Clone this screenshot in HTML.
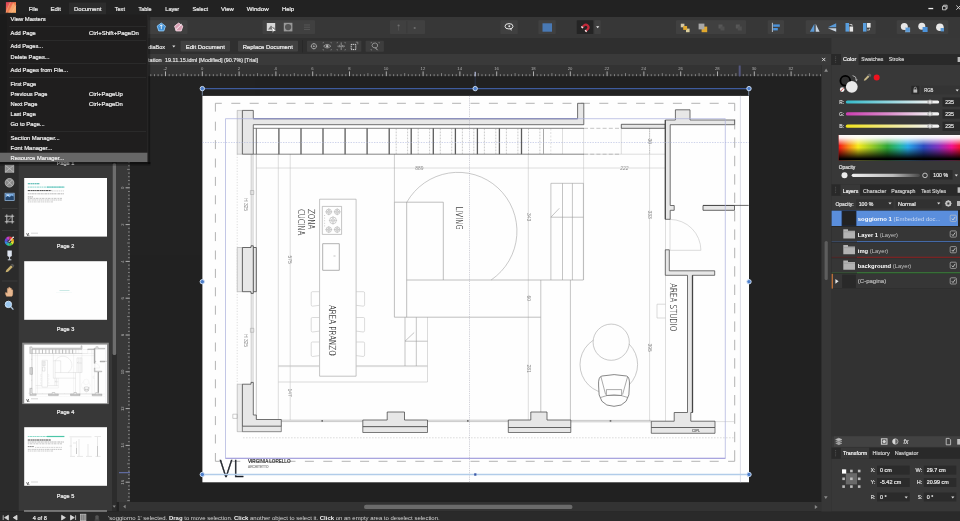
<!DOCTYPE html>
<html><head><meta charset="utf-8"><title>Affinity Publisher</title>
<style>
html,body{margin:0;padding:0;background:#222;overflow:hidden}
svg{display:block;position:absolute;left:0;top:0;opacity:.999;will-change:transform}
text{font-family:"Liberation Sans",sans-serif;white-space:pre}
</style></head><body>
<svg width="960" height="521" viewBox="0 0 960 521">

<rect x="0" y="0" width="960" height="521" fill="#222222" />
<rect x="0" y="0" width="960" height="17" fill="#232323" />
<rect x="0" y="17" width="960" height="21" fill="#383838" />
<rect x="0" y="38" width="960" height="16" fill="#303030" />
<rect x="0" y="54" width="831" height="11" fill="#3b3b3b" />
<rect x="119" y="65" width="702.4" height="11.4" fill="#343434" />
<rect x="116.5" y="77" width="13.5" height="425" fill="#3a3a3a" />
<rect x="130" y="76.4" width="693" height="425.6" fill="#222222" />
<g id="page">
<rect x="202.4" y="95.9" width="546.6" height="386.4" fill="#ffffff" />
<g fill="none" stroke-linecap="butt">
<path d="M215.4 111.6V103.3H221.8 M728.1 103.3H734.7V111.1 M215.4 453V461.3H221.8 M728.1 461.3H734.7V450.2" stroke="#a6a6a6" stroke-width="0.85" fill="none" />
<path d="M231.3 103.3H727 M231.3 461.3H727" stroke="#a6a6a6" stroke-width="0.85" fill="none" stroke-dasharray="9 9.4"/>
<path d="M215.4 121.7V452" stroke="#a6a6a6" stroke-width="0.85" fill="none" stroke-dasharray="9 9.4"/>
<path d="M734.7 119V449" stroke="#a6a6a6" stroke-width="0.85" fill="none" stroke-dasharray="10.4 8"/>
<path d="M740.4 95.9V482.3" stroke="#cfd0de" stroke-width="0.7" fill="none" />
<path d="M278.3 154V420 M290.2 154V420 M528.3 154V420 M583.6 128V280 M649.6 128V421 M621.3 128V154 M562.5 128V154 M665.5 219V421 M670 219V250" stroke="#c4c4c4" stroke-width="0.55" fill="none" />
<path d="M256.3 168H665 M584 154.2H665" stroke="#c4c4c4" stroke-width="0.55" fill="none" />
<path d="M243 437.8H734" stroke="#c4c4c4" stroke-width="0.6" fill="none" stroke-dasharray="1.6 1.4"/>
<path d="M237.2 154V384" stroke="#c8c8c8" stroke-width="0.6" fill="none" stroke-dasharray="1.2 1.6"/>
<path d="M584 128.3H621 M584 154.2H621" stroke="#9e9e9e" stroke-width="0.6" fill="none" stroke-dasharray="4 2.2"/>
<path d="M649.6 128.3V154" stroke="#9e9e9e" stroke-width="0.5" fill="none" stroke-dasharray="1.2 1.2"/>
<path d="M550.8 128.5V154" stroke="#c4c4c4" stroke-width="0.5" fill="none" stroke-dasharray="2 1.5"/>
<path d="M251.2 154V247.5 M253 154V247.5 M251.2 291.7V384 M253 291.7V384 M256.3 154V420" stroke="#9e9e9e" stroke-width="0.55" fill="none" />
<path d="M250.4 190.5h3.4v4h-3.4z M250.4 328.3h3.4v4h-3.4z" stroke="#9e9e9e" stroke-width="0.5" fill="none" />
<path d="M281.3 420.2H362.8 M281.3 421.6H362.8 M427.5 420.2H508.3 M427.5 421.6H508.3 M570.8 420.4H651.3 M570.8 421.8H651.3" stroke="#9e9e9e" stroke-width="0.55" fill="none" />
<path d="M715 421.6H735" stroke="#c4c4c4" stroke-width="0.5" fill="none" />
<rect x="321.4" y="420.1" width="1.6" height="1.6" fill="#666" stroke="none"/>
<rect x="467.0" y="420.1" width="1.6" height="1.6" fill="#666" stroke="none"/>
<rect x="609.7" y="420.1" width="1.6" height="1.6" fill="#666" stroke="none"/>
<path d="M319.6 199.2H356.1V376.2H319.6Z" stroke="#9e9e9e" stroke-width="0.6" fill="none" />
<path d="M322.3 206.4H341.6V234.4H322.3Z" stroke="#9e9e9e" stroke-width="0.6" fill="none" />
<path d="M324.6 215v1M324.6 217.6v1M324.6 220.2v1M324.6 222.8v1M324.6 225.4v1" stroke="#9e9e9e" stroke-width="0.5" fill="none" />
<circle cx="328.8" cy="211.8" r="2.7" stroke="#9e9e9e" stroke-width="0.5"/>
<circle cx="328.8" cy="211.8" r="1.4" stroke="#9e9e9e" stroke-width="0.4"/>
<path d="M325.3 211.8H332.3 M328.8 208.3V215.3" stroke="#9e9e9e" stroke-width="0.35" fill="none" />
<circle cx="337.2" cy="211.8" r="2.7" stroke="#9e9e9e" stroke-width="0.5"/>
<circle cx="337.2" cy="211.8" r="1.4" stroke="#9e9e9e" stroke-width="0.4"/>
<path d="M333.7 211.8H340.7 M337.2 208.3V215.3" stroke="#9e9e9e" stroke-width="0.35" fill="none" />
<circle cx="333" cy="220.4" r="3.4" stroke="#9e9e9e" stroke-width="0.5"/>
<circle cx="333" cy="220.4" r="1.7" stroke="#9e9e9e" stroke-width="0.4"/>
<path d="M328.8 220.4H337.2 M333 216.2V224.60000000000002" stroke="#9e9e9e" stroke-width="0.35" fill="none" />
<circle cx="328.8" cy="229.6" r="2.7" stroke="#9e9e9e" stroke-width="0.5"/>
<circle cx="328.8" cy="229.6" r="1.4" stroke="#9e9e9e" stroke-width="0.4"/>
<path d="M325.3 229.6H332.3 M328.8 226.1V233.1" stroke="#9e9e9e" stroke-width="0.35" fill="none" />
<circle cx="337.2" cy="229.6" r="2.7" stroke="#9e9e9e" stroke-width="0.5"/>
<circle cx="337.2" cy="229.6" r="1.4" stroke="#9e9e9e" stroke-width="0.4"/>
<path d="M333.7 229.6H340.7 M337.2 226.1V233.1" stroke="#9e9e9e" stroke-width="0.35" fill="none" />
<path d="M322.7 243.7H339.3V270.3H322.7Z" stroke="#9e9e9e" stroke-width="0.8" fill="none" />
<path d="M333.5 256h2" stroke="#9e9e9e" stroke-width="0.6" fill="none" />
<path d="M319.6 291.7H312.3Q311.2 291.7 311.2 292.9V304.7Q311.2 306.09999999999997 312.5 306.2L319.6 305.3" stroke="#c4c4c4" stroke-width="0.6" fill="none" />
<path d="M356.1 291.7H363.4Q364.6 291.7 364.6 292.9V304.7Q364.6 306.09999999999997 363.2 306.2L356.1 305.3" stroke="#c4c4c4" stroke-width="0.6" fill="none" />
<path d="M319.6 317.5H312.3Q311.2 317.5 311.2 318.7V330.5Q311.2 331.9 312.5 332.0L319.6 331.1" stroke="#c4c4c4" stroke-width="0.6" fill="none" />
<path d="M356.1 317.5H363.4Q364.6 317.5 364.6 318.7V330.5Q364.6 331.9 363.2 332.0L356.1 331.1" stroke="#c4c4c4" stroke-width="0.6" fill="none" />
<path d="M319.6 342H312.3Q311.2 342 311.2 343.2V355Q311.2 356.4 312.5 356.5L319.6 355.6" stroke="#c4c4c4" stroke-width="0.6" fill="none" />
<path d="M356.1 342H363.4Q364.6 342 364.6 343.2V355Q364.6 356.4 363.2 356.5L356.1 355.6" stroke="#c4c4c4" stroke-width="0.6" fill="none" />
<path d="M278.3 365.6H319.6 M278.3 366.6H319.6 M356.1 365.6H427.5 M356.1 366.6H427.5 M278.3 382H427.5 M427.5 317.2V382" stroke="#c4c4c4" stroke-width="0.6" fill="none" />
<path d="M394.4 202.2V317.2H540.8 M394.4 202.2H443.3V280 M406.7 202.2V317.2 M406.7 280H583.3" stroke="#9e9e9e" stroke-width="0.65" fill="none" />
<path d="M394.4 154V202.2" stroke="#9e9e9e" stroke-width="0.5" fill="none" />
<path d="M406.7 202.4 A58.9 58.9 0 1 1 491.1 280" stroke="#9e9e9e" stroke-width="0.55" fill="none" />
<path d="M405 317.2V366 M416.3 317.2V366 M405 341.2H427.5 M405 341.2L414.2 332.5" stroke="#9e9e9e" stroke-width="0.6" fill="none" />
<path d="M550.9 183.3H583.4 M550.9 183.3V280 M562.5 183.3V280 M572.4 183.3V280 M583.4 183.3V280 M550.9 217.2H583.4 M550.9 217.2L559.3 208.3" stroke="#9e9e9e" stroke-width="0.6" fill="none" />
<path d="M540.8 280V420 M570.4 280V420" stroke="#9e9e9e" stroke-width="0.6" fill="none" />
<circle cx="608.8" cy="364.5" r="28.8" stroke="#9e9e9e" stroke-width="0.55"/>
<circle cx="611.2" cy="342.2" r="18.1" stroke="#9e9e9e" stroke-width="0.55" fill="#fff"/>
<path d="M598.6 386 Q598 376.5 602 376 Q614 373.2 626.5 376 Q630 376.8 629.4 386 Q630.5 406.3 614 406.3 Q597.5 406.3 598.6 386Z" stroke="#555" stroke-width="0.7" fill="#fff" />
<path d="M601 377 L605.6 394.5 M627.5 377 L622.6 394.5 M606.4 389.6H621.6V395.5H606.4Z M600.5 397.5 Q614 392 627.8 397.5" stroke="#666" stroke-width="0.55" fill="none" />
<path d="M670 219.4 A31 31 0 0 1 700.9 250.3 H670" stroke="#c4c4c4" stroke-width="0.6" fill="none" />
<path d="M657 304.2H665.5 M657 304.2V318H665.5" stroke="#c4c4c4" stroke-width="0.6" fill="none" />
<path d="M237.2 110.4H242.4V154.2H237.2Z" stroke="#9a9a9a" stroke-width="0.5" fill="#ececec" />
<path d="M242.4 110.4H253.3V118.7H577.6V103.3H583.8V124.7H253.3V154.2H242.4Z" stroke="#454545" stroke-width="0.75" fill="#e8e8e8" stroke-linejoin="miter"/>
<path d="M253.3 118.7H577.6" stroke="#5a5f98" stroke-width="0.9" fill="none" />
<path d="M253.3 128.3H584 M253.3 154.2H584" stroke="#666" stroke-width="0.8" fill="none" />
<path d="M256.3 128.3V154.2" stroke="#5a5a5a" stroke-width="0.9" fill="none" />
<path d="M278.9 128.3V154.2" stroke="#5c5c5c" stroke-width="1.3" fill="none" />
<path d="M301.0 128.3V154.2" stroke="#5c5c5c" stroke-width="1.3" fill="none" />
<path d="M323.0 128.3V154.2" stroke="#5c5c5c" stroke-width="1.3" fill="none" />
<path d="M345.1 128.3V154.2" stroke="#5c5c5c" stroke-width="1.3" fill="none" />
<path d="M367.1 128.3V154.2" stroke="#5c5c5c" stroke-width="1.3" fill="none" />
<path d="M389.2 128.3V154.2" stroke="#5c5c5c" stroke-width="1.3" fill="none" />
<path d="M396.2 128.5V154 M407.6 128.5V154" stroke="#8a8a8a" stroke-width="0.45" fill="none" stroke-dasharray="1.8 1.2"/>
<path d="M411.2 128.3V154.2" stroke="#5c5c5c" stroke-width="1.3" fill="none" />
<path d="M418.2 128.5V154 M429.6 128.5V154" stroke="#8a8a8a" stroke-width="0.45" fill="none" stroke-dasharray="1.8 1.2"/>
<path d="M433.3 128.3V154.2" stroke="#5c5c5c" stroke-width="1.3" fill="none" />
<path d="M440.3 128.5V154 M451.7 128.5V154" stroke="#8a8a8a" stroke-width="0.45" fill="none" stroke-dasharray="1.8 1.2"/>
<path d="M455.4 128.3V154.2" stroke="#5c5c5c" stroke-width="1.3" fill="none" />
<path d="M462.4 128.5V154 M473.8 128.5V154" stroke="#8a8a8a" stroke-width="0.45" fill="none" stroke-dasharray="1.8 1.2"/>
<path d="M477.4 128.3V154.2" stroke="#5c5c5c" stroke-width="1.3" fill="none" />
<path d="M484.4 128.5V154 M495.8 128.5V154" stroke="#8a8a8a" stroke-width="0.45" fill="none" stroke-dasharray="1.8 1.2"/>
<path d="M499.4 128.3V154.2" stroke="#5c5c5c" stroke-width="1.3" fill="none" />
<path d="M506.4 128.5V154 M517.9 128.5V154" stroke="#8a8a8a" stroke-width="0.45" fill="none" stroke-dasharray="1.8 1.2"/>
<path d="M521.5 128.3V154.2" stroke="#5c5c5c" stroke-width="1.3" fill="none" />
<path d="M528.5 128.5V154 M539.9 128.5V154" stroke="#8a8a8a" stroke-width="0.45" fill="none" stroke-dasharray="1.8 1.2"/>
<path d="M543.5 128.3V154.2" stroke="#a0a0a0" stroke-width="0.9" fill="none" />
<path d="M621.3 124.3H665.3V128.3H621.3Z" stroke="#454545" stroke-width="0.8" fill="#e8e8e8" stroke-linejoin="miter"/>
<path d="M665.3 120H675.4V109.8H690V120H734.6V124.7H670.2V205.5H674.2V210.3H670.2V219.3H665.3Z" stroke="#454545" stroke-width="0.75" fill="#e8e8e8" stroke-linejoin="miter"/>
<path d="M665.3 120V219.3" stroke="#454545" stroke-width="1.1" fill="none" />
<path d="M703 205.5H734.5V210.3H703Z" stroke="#454545" stroke-width="0.8" fill="#e8e8e8" stroke-linejoin="miter"/>
<path d="M703 205.4H748.7" stroke="#454545" stroke-width="0.8" fill="none" />
<path d="M665.3 249.8H669.3V270.8H714.7V275.3H692.5V412.5H690.8V421.2H715V427.5H651.3V421.2H674.2V412.5H687.5V275.3H665.3Z" stroke="#454545" stroke-width="0.75" fill="#e8e8e8" stroke-linejoin="miter"/>
<path d="M692.5 275.3V412.5" stroke="#454545" stroke-width="1.3" fill="none" />
<path d="M651.3 427.5H715V433.3H651.3Z" stroke="#454545" stroke-width="0.7" fill="#e8e8e8" />
<path d="M237.2 247.5H242.4V291.7H237.2Z" stroke="#9a9a9a" stroke-width="0.5" fill="#ececec" />
<path d="M242.4 247.5H251V245.8H253.3V247.5H256.3V291.7H253.3V293.4H251V291.7H242.4Z" stroke="#454545" stroke-width="0.8" fill="#e8e8e8" stroke-linejoin="miter"/>
<path d="M253.3 247.5V291.7" stroke="#454545" stroke-width="0.9" fill="none" />
<path d="M237.2 384.2H242.4V431.7H237.2Z" stroke="#9a9a9a" stroke-width="0.5" fill="#ececec" />
<path d="M242.4 384.2H251V382.4H253.3V415H256.3V419.5H281.3V426.3H242.4Z" stroke="#454545" stroke-width="0.75" fill="#e8e8e8" stroke-linejoin="miter"/>
<path d="M242.4 426.3H281.3V431.7H242.4Z" stroke="#454545" stroke-width="0.6" fill="#e8e8e8" />
<path d="M232.8 414.2H237.2V418.4H232.8Z" stroke="#9e9e9e" stroke-width="0.5" fill="none" />
<path d="M362.8 420H387.2V412H404.5V420H427.5V426.7H362.8Z" stroke="#454545" stroke-width="0.75" fill="#e8e8e8" stroke-linejoin="miter"/>
<path d="M362.8 426.7H427.5V432.5H362.8Z" stroke="#454545" stroke-width="0.7" fill="#e8e8e8" />
<path d="M508.3 420H530.8V412H547V420H570.8V427.5H508.3Z" stroke="#454545" stroke-width="0.75" fill="#e8e8e8" stroke-linejoin="miter"/>
<path d="M508.3 427.5H570.8V432.5H508.3Z" stroke="#454545" stroke-width="0.7" fill="#e8e8e8" />
</g>
<text font-size="9.2" fill="#222222" textLength="20.3" lengthAdjust="spacingAndGlyphs" transform="translate(307.5 208.9) rotate(90)" style="font-family:'DejaVu Sans Light','Liberation Sans',sans-serif;font-weight:200" stroke="#222" stroke-width="0.1">ZONA</text>
<text font-size="9.2" fill="#222222" textLength="26.6" lengthAdjust="spacingAndGlyphs" transform="translate(298.1 208.9) rotate(90)" style="font-family:'DejaVu Sans Light','Liberation Sans',sans-serif;font-weight:200" stroke="#222" stroke-width="0.1">CUCINA</text>
<text font-size="9.2" fill="#222222" textLength="23" lengthAdjust="spacingAndGlyphs" transform="translate(455.9 206.7) rotate(90)" style="font-family:'DejaVu Sans Light','Liberation Sans',sans-serif;font-weight:200" stroke="#222" stroke-width="0.1">LIVING</text>
<text font-size="9.2" fill="#222222" textLength="50.8" lengthAdjust="spacingAndGlyphs" transform="translate(328.8 305) rotate(90)" style="font-family:'DejaVu Sans Light','Liberation Sans',sans-serif;font-weight:200" stroke="#222" stroke-width="0.1">AREA PRANZO</text>
<text font-size="9.2" fill="#222222" textLength="48" lengthAdjust="spacingAndGlyphs" transform="translate(669.6 283.3) rotate(90)" style="font-family:'DejaVu Sans Light','Liberation Sans',sans-serif;font-weight:200" stroke="#222" stroke-width="0.1">AREA STUDIO</text>
<text font-size="4.9" fill="#8e8e8e" transform="translate(244.3 198) rotate(90)" >H 325</text>
<text font-size="4.9" fill="#8e8e8e" transform="translate(244.3 334) rotate(90)" >H 325</text>
<text font-size="4.9" fill="#8e8e8e" transform="translate(288.2 255.5) rotate(90)" >575</text>
<text font-size="4.9" fill="#8e8e8e" transform="translate(288.3 388.5) rotate(90)" >147</text>
<text font-size="4.9" fill="#8e8e8e" transform="translate(526.6 213) rotate(90)" >343</text>
<text font-size="4.9" fill="#8e8e8e" transform="translate(526.6 295.5) rotate(90)" >60</text>
<text font-size="4.9" fill="#8e8e8e" transform="translate(526.6 364.5) rotate(90)" >281</text>
<text font-size="4.9" fill="#8e8e8e" transform="translate(647.8 138.5) rotate(90)" >30</text>
<text font-size="4.9" fill="#8e8e8e" transform="translate(647.8 210.5) rotate(90)" >333</text>
<text font-size="4.9" fill="#8e8e8e" transform="translate(647.8 343.5) rotate(90)" >395</text>
<text x="415.3" y="170.3" font-size="4.9" fill="#8e8e8e" >889</text>
<text x="620.3" y="170" font-size="4.9" fill="#8e8e8e" font-style="italic">222</text>
<text x="692" y="432.2" font-size="3.6" fill="#777" stroke="#777" stroke-width="0.22" >CIPL</text>
<text x="219.2" y="476.5" font-size="23.6" fill="#1c2028" stroke="#1c2028" stroke-width="0.55" textLength="24.6" lengthAdjust="spacingAndGlyphs" style="font-family:'DejaVu Sans Light','Liberation Sans',sans-serif;font-weight:200">VL</text>
<text x="248" y="462.9" font-size="4.7" fill="#333" stroke="#333" stroke-width="0.2" textLength="42.5" lengthAdjust="spacingAndGlyphs" >VIRGINIA LORELLO</text>
<text x="248" y="468" font-size="3.6" fill="#999" stroke="#999" stroke-width="0.22" textLength="20.5" lengthAdjust="spacingAndGlyphs" >ARCHITETTO</text>
<g fill="none">
<path d="M225.5 118.7H725.3V458.4H225.5Z" stroke="#aab0dc" stroke-width="0.7" fill="none" />
<path d="M225.5 458.4H725.3" stroke="#aaa6e0" stroke-width="1.1" fill="none" />
<path d="M202.4 142.5H748.8" stroke="#a8b2dc" stroke-width="0.55" fill="none" stroke-dasharray="1.4 1.2"/>
<path d="M469.5 95.9V482.3" stroke="#a8a8b6" stroke-width="0.5" fill="none" stroke-dasharray="1.3 0.9"/>
</g>
<path d="M202.3 88.6H748.7" stroke="#3f5c9e" stroke-width="1.1" fill="none" />
<path d="M202.3 474.5H748.7" stroke="#b2cdea" stroke-width="1.3" fill="none" />
<path d="M202.3 88.6V95.6 M748.7 88.6V95.6" stroke="#9fb4d8" stroke-width="0.7" fill="none" />
<path d="M475.2 77V88.6" stroke="#34446c" stroke-width="0.6" fill="none" />
<circle cx="202.3" cy="88.6" r="2.2" fill="#4f80cc" stroke="#d0dff4" stroke-width="0.95"/>
<circle cx="475.2" cy="88.6" r="2.2" fill="#4f80cc" stroke="#d0dff4" stroke-width="0.95"/>
<circle cx="749" cy="88.6" r="2.2" fill="#4f80cc" stroke="#d0dff4" stroke-width="0.95"/>
<circle cx="202.3" cy="281.7" r="2.2" fill="#4f80cc" stroke="#d0dff4" stroke-width="0.95"/>
<circle cx="749" cy="281.7" r="2.2" fill="#4f80cc" stroke="#d0dff4" stroke-width="0.95"/>
<circle cx="202.3" cy="474.5" r="2.2" fill="#4f80cc" stroke="#d0dff4" stroke-width="0.95"/>
<circle cx="749" cy="474.5" r="2.2" fill="#4f80cc" stroke="#d0dff4" stroke-width="0.95"/>
<rect x="474.2" y="473.3" width="2.2" height="2.4" fill="#3c5aa8" />
</g>
<g id="toolbar">
<rect x="120" y="20.3" width="67.5" height="13.7" fill="#414141" rx="0.8"/>
<rect x="262.5" y="20.3" width="52.5" height="13.7" fill="#414141" rx="0.8"/>
<rect x="390" y="20.3" width="35" height="13.7" fill="#414141" rx="0.8"/>
<rect x="500.3" y="20.3" width="17.5" height="13.7" fill="#414141" rx="0.8"/>
<rect x="538.3" y="20.3" width="17.5" height="13.7" fill="#414141" rx="0.8"/>
<rect x="576.7" y="20.3" width="16.6" height="13.7" fill="#252525" rx="0.8"/>
<rect x="594.3" y="20.3" width="6.5" height="13.7" fill="#414141" rx="0.8"/>
<rect x="676" y="20.3" width="70" height="13.7" fill="#414141" rx="0.8"/>
<rect x="767.7" y="20.3" width="16.3" height="13.7" fill="#414141" rx="0.8"/>
<rect x="805.7" y="20.3" width="70.0" height="13.7" fill="#414141" rx="0.8"/>
<rect x="896.7" y="20.3" width="51.6" height="13.7" fill="#414141" rx="0.8"/>
<polygon points="161.30,23.10 165.39,26.07 163.83,30.88 158.77,30.88 157.21,26.07" fill="#3f8fd6" stroke="#8cc4f0" stroke-width="1" stroke-linejoin="round"/>
<path d="M161.3 24.8 V29.2 M159.8 26.3 L161.3 24.8 L162.8 26.3" stroke="#fff" stroke-width="0.8" fill="none"/>
<polygon points="178.70,23.10 182.79,26.07 181.23,30.88 176.17,30.88 174.61,26.07" fill="#d9a0b4" stroke="#f0d0dc" stroke-width="1" stroke-linejoin="round"/>
<path d="M175.6 30 L181.8 24" stroke="#fff" stroke-width="0.9"/>
<rect x="266.8" y="23" width="8.4" height="8" fill="#d8d8d8" />
<path d="M268 29.5 L271 25.5 L273 28 L274 27 L275 29.5Z" fill="#777"/>
<path d="M271.5 26.5 L276 31 L273.8 31 L272.8 32.8Z" fill="#fff" stroke="#555" stroke-width="0.4"/>
<rect x="283.8" y="22.8" width="8.6" height="8.6" fill="#9a9a9a" />
<circle cx="288.1" cy="27.1" r="3.1" fill="#555"/>
<path d="M304 25 H310 M304 27.2 H310 M304 29.4 H310" stroke="#5a5a5a" stroke-width="0.9"/>
<line x1="406.8" y1="21" x2="406.8" y2="33.3" stroke="#3a3a3a" stroke-width="0.8" />
<circle cx="398.6" cy="25.6" r="1.1" fill="#6e6e6e"/><path d="M398.6 26V30.6" stroke="#585858" stroke-width="0.8"/>
<circle cx="414.7" cy="28" r="1.1" fill="#6e6e6e"/>
<ellipse cx="509" cy="26.3" rx="4" ry="2.7" fill="none" stroke="#e8e8e8" stroke-width="1"/><circle cx="509.3" cy="26.3" r="1" fill="#e8e8e8"/><path d="M509.5 28.6 L511.6 31 L511.4 28.4Z" fill="#e8e8e8"/>
<rect x="542.5" y="23.3" width="9.5" height="8.4" fill="#4a7ab5" />
<g transform="translate(585.6 27.6) rotate(45)"><path d="M-3.7 2.9V-0.3A3.7 3.7 0 0 1 3.7 -0.3V2.9H1.5V-0.3A1.5 1.5 0 0 0 -1.5 -0.3V2.9Z" fill="#c22a3a"/><path d="M-3.7 1.5H-1.5V2.9H-3.7Z M1.5 1.5H3.7V2.9H1.5Z" fill="#ececec"/></g>
<path d="M596.1 26.3 H599.3 L597.7 28.3Z" fill="#e8e8e8"/>
<rect x="680.8" y="23.7" width="3.6" height="3.6" fill="#d4c9a8" />
<rect x="686" y="28.6" width="3.6" height="3.6" fill="#dccf9c" />
<rect x="683.2" y="26" width="3.9" height="3.9" fill="#e2a92e" />
<rect x="701.6" y="26.6" width="5.6" height="5.6" fill="#e2a92e" />
<rect x="698.6" y="23.6" width="5.8" height="5.8" fill="#a9a9a9" />
<rect x="718.5" y="24.5" width="4" height="4" fill="#585858" />
<rect x="720.5" y="26.5" width="4" height="4" fill="#505050" />
<rect x="735.8" y="24.5" width="4" height="4" fill="#585858" />
<rect x="737.8" y="26.5" width="4" height="4" fill="#505050" />
<path d="M772.4 22.8 V32" stroke="#cfe0f2" stroke-width="0.8"/>
<rect x="773.2" y="24.4" width="6.6" height="2.4" fill="#4d94dc" />
<rect x="773.2" y="28" width="4.6" height="2.4" fill="#4d94dc" />
<path d="M814.4 23.8 V31.7 H809.9Z" fill="#5b9bd8"/><path d="M815.7 23.8 V31.7 H819.6Z" fill="#c9d4e0"/>
<path d="M827.8 27.2 H836.2 V23.2Z" fill="#5b9bd8"/><path d="M827.8 28.2 H836.2 V31.8Z" fill="#c9d4e0"/>
<rect x="845.5" y="23" width="3.5" height="8.6" fill="#5aa0e0" />
<rect x="849.5" y="26.5" width="3.6" height="5.1" fill="#e8e8e8" />
<path d="M849.5 24.5 H852 V26" stroke="#e8e8e8" stroke-width="0.7" fill="none"/>
<rect x="863" y="23" width="3.5" height="8.6" fill="#5aa0e0" />
<rect x="867" y="23" width="3.6" height="4.6" fill="#e8e8e8" />
<path d="M867 30 H869.5 V28.5" stroke="#e8e8e8" stroke-width="0.7" fill="none"/>
<circle cx="904.3" cy="26.6" r="3.5" fill="#e8e8e8"/>
<rect x="905.6" y="27.8" width="4.3" height="4.2" fill="#5b9bd8" stroke="#9cc0e4" stroke-width="0.4"/>
<circle cx="921.8" cy="26.2" r="3.5" fill="#e8e8e8"/>
<rect x="922.6" y="27" width="5" height="5" fill="#4d94dc" />
<circle cx="939.9" cy="27.3" r="3.8" fill="#ececec"/>
<rect x="940.6" y="28" width="3.4" height="3.4" fill="#5b9bd8" />
</g>
<rect x="928.4" y="7.9" width="4.8" height="1.3" fill="#f0f0f0" />
<path d="M942.5 6.3 H946 V9.8 H942.5Z M943.6 6.3 V5.2 H947.1 V8.7 H946" fill="none" stroke="#ddd" stroke-width="0.8"/>
<path d="M956.3 5.5 L960.5 9.7 M960.5 5.5 L956.3 9.7" stroke="#ddd" stroke-width="0.9"/>
<g id="ctx">
<text x="120" y="48.3" font-size="6" fill="#ddd" stroke="#ddd" stroke-width="0.22" >Page Box:</text>
<text x="140.6" y="48.6" font-size="6" fill="#e6e6e6" stroke="#e6e6e6" stroke-width="0.22" textLength="24.4" lengthAdjust="spacingAndGlyphs" >MediaBox</text>
<path d="M172.2 45.6 H175.4 L173.8 47.6Z" fill="#e0e0e0"/>
<rect x="180.6" y="40.8" width="49.4" height="10.7" fill="#424242" rx="0.8"/>
<text x="185.8" y="48.6" font-size="6.1" fill="#f0f0f0" stroke="#f0f0f0" stroke-width="0.22" textLength="39.2" lengthAdjust="spacingAndGlyphs" >Edit Document</text>
<rect x="238" y="40.8" width="60" height="10.7" fill="#424242" rx="0.8"/>
<text x="242.8" y="48.6" font-size="6.1" fill="#f0f0f0" stroke="#f0f0f0" stroke-width="0.22" textLength="50" lengthAdjust="spacingAndGlyphs" >Replace Document</text>
<rect x="307" y="40.7" width="54.4" height="11.1" fill="#3e3e3e" rx="0.8"/>
<rect x="365.6" y="40.7" width="18.3" height="11.1" fill="#3e3e3e" rx="0.8"/>
<rect x="302" y="40" width="0.8" height="12.5" fill="#282828" />
<g fill="none" stroke="#c4c4c4" stroke-width="0.6">
<circle cx="313.9" cy="46.2" r="2.6"/><path d="M313.9 43V44.4M313.9 48V49.4M310.7 46.2H312.1M315.7 46.2H317.1"/><circle cx="313.9" cy="46.2" r="0.5" fill="#c4c4c4"/>
<path d="M323.6 46.2Q327.2 42.6 330.8 46.2Q327.2 49.8 323.6 46.2Z"/><circle cx="327.2" cy="46.2" r="1" fill="#c4c4c4"/><path d="M323 43.4V42.4H324M330.4 42.4H331.4V43.4M323 49V50H324M330.4 50H331.4V49" stroke="#8a8a8a"/>
<path d="M341.2 42.4V50M337.4 46.2H340M345 46.2H342.4"/><path d="M339.2 45L340.4 46.2L339.2 47.4M343.2 45L342 46.2L343.2 47.4"/><path d="M337 43.4V42.4H338M344.4 42.4H345.4V43.4M337 49V50H338M344.4 50H345.4V49" stroke="#8a8a8a"/>
<path d="M351.2 44.4H355.8V49.6H351.2Z" stroke="#f0f0f0" stroke-width="0.9" stroke-dasharray="1.2 0.7"/><path d="M355.8 42.2H357.8V44.4" stroke="#aaa"/>
<path d="M372 45.4Q372.4 42.6 375.4 43Q378.2 43.6 377.6 46.2Q376.8 48.6 374 47.8Q372.2 47.2 372 45.4Z"/><path d="M375.2 47.6L377.6 50.2" stroke-width="0.8"/><path d="M371 43.4V42.4H372M378.4 42.4H379.4V43.4M371 49V50H372" stroke="#8a8a8a"/>
</g>
</g>
<text x="130.3" y="61.8" font-size="6" fill="#e0e0e0" stroke="#e0e0e0" stroke-width="0.22" textLength="31.4" lengthAdjust="spacingAndGlyphs" >Presentation</text>
<text x="165" y="61.8" font-size="6" fill="#e0e0e0" stroke="#e0e0e0" stroke-width="0.22" textLength="93" lengthAdjust="spacingAndGlyphs" >19.11.15.idml [Modified] (90.7%) [Trial]</text>
<path d="M822.1 57.9 L825.3 61.1 M825.3 57.9 L822.1 61.1" stroke="#e8e8e8" stroke-width="0.9"/>
<g id="rulers">
<text x="165.3" y="69.9" font-size="4.2" fill="#b2b2b2" text-anchor="middle" >-2</text>
<text x="202.1" y="69.9" font-size="4.2" fill="#b2b2b2" text-anchor="middle" >0</text>
<text x="238.9" y="69.9" font-size="4.2" fill="#b2b2b2" text-anchor="middle" >2</text>
<text x="275.7" y="69.9" font-size="4.2" fill="#b2b2b2" text-anchor="middle" >4</text>
<text x="312.5" y="69.9" font-size="4.2" fill="#b2b2b2" text-anchor="middle" >6</text>
<text x="349.3" y="69.9" font-size="4.2" fill="#b2b2b2" text-anchor="middle" >8</text>
<text x="386.1" y="69.9" font-size="4.2" fill="#b2b2b2" text-anchor="middle" >10</text>
<text x="422.9" y="69.9" font-size="4.2" fill="#b2b2b2" text-anchor="middle" >12</text>
<text x="459.7" y="69.9" font-size="4.2" fill="#b2b2b2" text-anchor="middle" >14</text>
<text x="496.5" y="69.9" font-size="4.2" fill="#b2b2b2" text-anchor="middle" >16</text>
<text x="533.3" y="69.9" font-size="4.2" fill="#b2b2b2" text-anchor="middle" >18</text>
<text x="570.1" y="69.9" font-size="4.2" fill="#b2b2b2" text-anchor="middle" >20</text>
<text x="606.9" y="69.9" font-size="4.2" fill="#b2b2b2" text-anchor="middle" >22</text>
<text x="643.7" y="69.9" font-size="4.2" fill="#b2b2b2" text-anchor="middle" >24</text>
<text x="680.5" y="69.9" font-size="4.2" fill="#b2b2b2" text-anchor="middle" >26</text>
<text x="717.3" y="69.9" font-size="4.2" fill="#b2b2b2" text-anchor="middle" >28</text>
<text x="754.1" y="69.9" font-size="4.2" fill="#b2b2b2" text-anchor="middle" >30</text>
<text x="790.9" y="69.9" font-size="4.2" fill="#b2b2b2" text-anchor="middle" >32</text>
<path d="M132.38 74.2V76.2 M136.06 74.2V76.2 M139.74 74.2V76.2 M143.42 74.2V76.2 M150.78 74.2V76.2 M154.46 74.2V76.2 M158.14 74.2V76.2 M161.82 74.2V76.2 M169.18 74.2V76.2 M172.86 74.2V76.2 M176.54 74.2V76.2 M180.22 74.2V76.2 M187.58 74.2V76.2 M191.26 74.2V76.2 M194.94 74.2V76.2 M198.62 74.2V76.2 M205.98 74.2V76.2 M209.66 74.2V76.2 M213.34 74.2V76.2 M217.02 74.2V76.2 M224.38 74.2V76.2 M228.06 74.2V76.2 M231.74 74.2V76.2 M235.42 74.2V76.2 M242.78 74.2V76.2 M246.46 74.2V76.2 M250.14 74.2V76.2 M253.82 74.2V76.2 M261.18 74.2V76.2 M264.86 74.2V76.2 M268.54 74.2V76.2 M272.22 74.2V76.2 M279.58 74.2V76.2 M283.26 74.2V76.2 M286.94 74.2V76.2 M290.62 74.2V76.2 M297.98 74.2V76.2 M301.66 74.2V76.2 M305.34 74.2V76.2 M309.02 74.2V76.2 M316.38 74.2V76.2 M320.06 74.2V76.2 M323.74 74.2V76.2 M327.42 74.2V76.2 M334.78 74.2V76.2 M338.46 74.2V76.2 M342.14 74.2V76.2 M345.82 74.2V76.2 M353.18 74.2V76.2 M356.86 74.2V76.2 M360.54 74.2V76.2 M364.22 74.2V76.2 M371.58 74.2V76.2 M375.26 74.2V76.2 M378.94 74.2V76.2 M382.62 74.2V76.2 M389.98 74.2V76.2 M393.66 74.2V76.2 M397.34 74.2V76.2 M401.02 74.2V76.2 M408.38 74.2V76.2 M412.06 74.2V76.2 M415.74 74.2V76.2 M419.42 74.2V76.2 M426.78 74.2V76.2 M430.46 74.2V76.2 M434.14 74.2V76.2 M437.82 74.2V76.2 M445.18 74.2V76.2 M448.86 74.2V76.2 M452.54 74.2V76.2 M456.22 74.2V76.2 M463.58 74.2V76.2 M467.26 74.2V76.2 M470.94 74.2V76.2 M474.62 74.2V76.2 M481.98 74.2V76.2 M485.66 74.2V76.2 M489.34 74.2V76.2 M493.02 74.2V76.2 M500.38 74.2V76.2 M504.06 74.2V76.2 M507.74 74.2V76.2 M511.42 74.2V76.2 M518.78 74.2V76.2 M522.46 74.2V76.2 M526.14 74.2V76.2 M529.82 74.2V76.2 M537.18 74.2V76.2 M540.86 74.2V76.2 M544.54 74.2V76.2 M548.22 74.2V76.2 M555.58 74.2V76.2 M559.26 74.2V76.2 M562.94 74.2V76.2 M566.62 74.2V76.2 M573.98 74.2V76.2 M577.66 74.2V76.2 M581.34 74.2V76.2 M585.02 74.2V76.2 M592.38 74.2V76.2 M596.06 74.2V76.2 M599.74 74.2V76.2 M603.42 74.2V76.2 M610.78 74.2V76.2 M614.46 74.2V76.2 M618.14 74.2V76.2 M621.82 74.2V76.2 M629.18 74.2V76.2 M632.86 74.2V76.2 M636.54 74.2V76.2 M640.22 74.2V76.2 M647.58 74.2V76.2 M651.26 74.2V76.2 M654.94 74.2V76.2 M658.62 74.2V76.2 M665.98 74.2V76.2 M669.66 74.2V76.2 M673.34 74.2V76.2 M677.02 74.2V76.2 M684.38 74.2V76.2 M688.06 74.2V76.2 M691.74 74.2V76.2 M695.42 74.2V76.2 M702.78 74.2V76.2 M706.46 74.2V76.2 M710.14 74.2V76.2 M713.82 74.2V76.2 M721.18 74.2V76.2 M724.86 74.2V76.2 M728.54 74.2V76.2 M732.22 74.2V76.2 M739.58 74.2V76.2 M743.26 74.2V76.2 M746.94 74.2V76.2 M750.62 74.2V76.2 M757.98 74.2V76.2 M761.66 74.2V76.2 M765.34 74.2V76.2 M769.02 74.2V76.2 M776.38 74.2V76.2 M780.06 74.2V76.2 M783.74 74.2V76.2 M787.42 74.2V76.2 M794.78 74.2V76.2 M798.46 74.2V76.2 M802.14 74.2V76.2 M805.82 74.2V76.2 M813.18 74.2V76.2 M816.86 74.2V76.2 M820.54 74.2V76.2" stroke="#9a9a9a" stroke-width="0.8" fill="none"/>
<path d="M147.10 73.2V76.2 M183.90 73.2V76.2 M220.70 73.2V76.2 M257.50 73.2V76.2 M294.30 73.2V76.2 M331.10 73.2V76.2 M367.90 73.2V76.2 M404.70 73.2V76.2 M441.50 73.2V76.2 M478.30 73.2V76.2 M515.10 73.2V76.2 M551.90 73.2V76.2 M588.70 73.2V76.2 M625.50 73.2V76.2 M662.30 73.2V76.2 M699.10 73.2V76.2 M735.90 73.2V76.2 M772.70 73.2V76.2 M809.50 73.2V76.2" stroke="#a8a8a8" stroke-width="0.7" fill="none"/>
<path d="M165.50 71.4V76.2 M202.30 71.4V76.2 M239.10 71.4V76.2 M275.90 71.4V76.2 M312.70 71.4V76.2 M349.50 71.4V76.2 M386.30 71.4V76.2 M423.10 71.4V76.2 M459.90 71.4V76.2 M496.70 71.4V76.2 M533.50 71.4V76.2 M570.30 71.4V76.2 M607.10 71.4V76.2 M643.90 71.4V76.2 M680.70 71.4V76.2 M717.50 71.4V76.2 M754.30 71.4V76.2 M791.10 71.4V76.2" stroke="#d8d8d8" stroke-width="0.75" fill="none"/>
<text x="0" y="0" font-size="4.2" fill="#b2b2b2" text-anchor="middle" transform="translate(123.8 114.3) rotate(-90)">-4</text>
<text x="0" y="0" font-size="4.2" fill="#b2b2b2" text-anchor="middle" transform="translate(123.8 151.1) rotate(-90)">-2</text>
<text x="0" y="0" font-size="4.2" fill="#b2b2b2" text-anchor="middle" transform="translate(123.8 187.9) rotate(-90)">0</text>
<text x="0" y="0" font-size="4.2" fill="#b2b2b2" text-anchor="middle" transform="translate(123.8 224.7) rotate(-90)">2</text>
<text x="0" y="0" font-size="4.2" fill="#b2b2b2" text-anchor="middle" transform="translate(123.8 261.5) rotate(-90)">4</text>
<text x="0" y="0" font-size="4.2" fill="#b2b2b2" text-anchor="middle" transform="translate(123.8 298.3) rotate(-90)">6</text>
<text x="0" y="0" font-size="4.2" fill="#b2b2b2" text-anchor="middle" transform="translate(123.8 335.1) rotate(-90)">8</text>
<text x="0" y="0" font-size="4.2" fill="#b2b2b2" text-anchor="middle" transform="translate(123.8 371.9) rotate(-90)">10</text>
<text x="0" y="0" font-size="4.2" fill="#b2b2b2" text-anchor="middle" transform="translate(123.8 408.7) rotate(-90)">12</text>
<text x="0" y="0" font-size="4.2" fill="#b2b2b2" text-anchor="middle" transform="translate(123.8 445.5) rotate(-90)">14</text>
<text x="0" y="0" font-size="4.2" fill="#b2b2b2" text-anchor="middle" transform="translate(123.8 482.3) rotate(-90)">16</text>
<path d="M128 81.08H129.8 M128 84.76H129.8 M128 88.44H129.8 M128 92.12H129.8 M128 99.48H129.8 M128 103.16H129.8 M128 106.84H129.8 M128 110.52H129.8 M128 117.88H129.8 M128 121.56H129.8 M128 125.24H129.8 M128 128.92H129.8 M128 136.28H129.8 M128 139.96H129.8 M128 143.64H129.8 M128 147.32H129.8 M128 154.68H129.8 M128 158.36H129.8 M128 162.04H129.8 M128 165.72H129.8 M128 173.08H129.8 M128 176.76H129.8 M128 180.44H129.8 M128 184.12H129.8 M128 191.48H129.8 M128 195.16H129.8 M128 198.84H129.8 M128 202.52H129.8 M128 209.88H129.8 M128 213.56H129.8 M128 217.24H129.8 M128 220.92H129.8 M128 228.28H129.8 M128 231.96H129.8 M128 235.64H129.8 M128 239.32H129.8 M128 246.68H129.8 M128 250.36H129.8 M128 254.04H129.8 M128 257.72H129.8 M128 265.08H129.8 M128 268.76H129.8 M128 272.44H129.8 M128 276.12H129.8 M128 283.48H129.8 M128 287.16H129.8 M128 290.84H129.8 M128 294.52H129.8 M128 301.88H129.8 M128 305.56H129.8 M128 309.24H129.8 M128 312.92H129.8 M128 320.28H129.8 M128 323.96H129.8 M128 327.64H129.8 M128 331.32H129.8 M128 338.68H129.8 M128 342.36H129.8 M128 346.04H129.8 M128 349.72H129.8 M128 357.08H129.8 M128 360.76H129.8 M128 364.44H129.8 M128 368.12H129.8 M128 375.48H129.8 M128 379.16H129.8 M128 382.84H129.8 M128 386.52H129.8 M128 393.88H129.8 M128 397.56H129.8 M128 401.24H129.8 M128 404.92H129.8 M128 412.28H129.8 M128 415.96H129.8 M128 419.64H129.8 M128 423.32H129.8 M128 430.68H129.8 M128 434.36H129.8 M128 438.04H129.8 M128 441.72H129.8 M128 449.08H129.8 M128 452.76H129.8 M128 456.44H129.8 M128 460.12H129.8 M128 467.48H129.8 M128 471.16H129.8 M128 474.84H129.8 M128 478.52H129.8 M128 485.88H129.8 M128 489.56H129.8 M128 493.24H129.8 M128 496.92H129.8" stroke="#9a9a9a" stroke-width="0.8" fill="none"/>
<path d="M127.2 95.80H129.8 M127.2 132.60H129.8 M127.2 169.40H129.8 M127.2 206.20H129.8 M127.2 243.00H129.8 M127.2 279.80H129.8 M127.2 316.60H129.8 M127.2 353.40H129.8 M127.2 390.20H129.8 M127.2 427.00H129.8 M127.2 463.80H129.8 M127.2 500.60H129.8" stroke="#a8a8a8" stroke-width="0.7" fill="none"/>
<path d="M125.6 114.20H129.8 M125.6 151.00H129.8 M125.6 187.80H129.8 M125.6 224.60H129.8 M125.6 261.40H129.8 M125.6 298.20H129.8 M125.6 335.00H129.8 M125.6 371.80H129.8 M125.6 408.60H129.8 M125.6 445.40H129.8 M125.6 482.20H129.8" stroke="#d8d8d8" stroke-width="0.75" fill="none"/>
<rect x="474.5" y="71.8" width="1.5" height="4.6" fill="#a0a6c0" />
<rect x="738.7" y="65.5" width="2" height="10.8" fill="#55587e" />
<rect x="119" y="472.2" width="11" height="1" fill="#6a78b8" />
</g>
<g id="left">
<rect x="0" y="38" width="18.5" height="473" fill="#2c2c2c" />
<rect x="18.5" y="38" width="93.5" height="473" fill="#393939" />
<rect x="112" y="38" width="4.6" height="473" fill="#2d2d2d" />
<rect x="112.6" y="163" width="3.6" height="192" fill="#6e6e6e" rx="1.6"/>
<path d="M112.6 505.6H115.8L114.2 507.8Z" fill="#8a8a8a"/>
<rect x="5.2" y="165.2" width="8.6" height="7" fill="#8e8e8e" stroke="#bdbdbd" stroke-width="0.7"/><path d="M5.2 165.2L13.8 172.2M13.8 165.2L5.2 172.2" stroke="#d4d4d4" stroke-width="0.55"/>
<circle cx="9.5" cy="182.8" r="4.3" fill="#8a8a8a" stroke="#c4c4c4" stroke-width="0.8"/><path d="M6.6 179.9L12.4 185.7M12.4 179.9L6.6 185.7" stroke="#dadada" stroke-width="0.6"/>
<rect x="5" y="193.2" width="9.2" height="7.2" fill="#24466e" stroke="#9dc2ea" stroke-width="0.7"/><path d="M5.6 194H13.6V196.4L11.6 195.4L9.4 197.2L7.6 196L5.6 197.4Z" fill="#7fb0e4"/><circle cx="8" cy="195.2" r="0.8" fill="#f0f6ff"/>
<rect x="2" y="208" width="15.5" height="0.8" fill="#3f3f3f" />
<path d="M6.8 214.4V223.6M12.2 214.4V223.6M4.8 216.2H14.2M4.8 221.8H14.2" stroke="#c8c8c8" stroke-width="0.95" fill="none"/><path d="M6.8 221.8L12.2 216.2" stroke="#c8c8c8" stroke-width="0.6"/>
<rect x="2" y="230" width="15.5" height="0.8" fill="#3f3f3f" />
<defs><linearGradient id="cw" x1="0" y1="0" x2="1" y2="1"><stop offset="0" stop-color="#e8402a"/><stop offset="0.35" stop-color="#e8d030"/><stop offset="0.6" stop-color="#38b060"/><stop offset="0.8" stop-color="#3070e0"/><stop offset="1" stop-color="#c040c0"/></linearGradient></defs>
<path d="M9.3 241.3L9.30 236.60A4.7 4.7 0 0 1 12.69 238.04Z" fill="#e83a3a"/><path d="M9.3 241.3L12.62 237.98A4.7 4.7 0 0 1 14.00 241.39Z" fill="#f0a020"/><path d="M9.3 241.3L14.00 241.30A4.7 4.7 0 0 1 12.56 244.69Z" fill="#e8e030"/><path d="M9.3 241.3L12.62 244.62A4.7 4.7 0 0 1 9.21 246.00Z" fill="#58c838"/><path d="M9.3 241.3L9.30 246.00A4.7 4.7 0 0 1 5.91 244.56Z" fill="#30c0a0"/><path d="M9.3 241.3L5.98 244.62A4.7 4.7 0 0 1 4.60 241.21Z" fill="#3888e8"/><path d="M9.3 241.3L4.60 241.30A4.7 4.7 0 0 1 6.04 237.91Z" fill="#6a48d8"/><path d="M9.3 241.3L5.98 237.98A4.7 4.7 0 0 1 9.39 236.60Z" fill="#c040c8"/><circle cx="9.3" cy="241.3" r="1.9" fill="#3a3a50"/><path d="M8.6 242.2L13.4 237" stroke="#fff" stroke-width="0.9"/><circle cx="13.2" cy="237.2" r="0.7" fill="#fff"/>
<path d="M7.4 250.6H11.8V255.2Q11.8 257 9.6 257Q7.4 257 7.4 255.2Z" fill="#dfe6f2"/><path d="M9.6 257V259.6M7.8 259.8H11.4" stroke="#dfe6f2" stroke-width="0.9"/>
<path d="M5.6 272.3L6.3 270L11 265.3L12.8 267.1L8.1 271.8Z" fill="#c8b070"/><path d="M10.6 264.6L13.4 267.4L14.4 265.4L12.6 263.8Z" fill="#555"/>
<rect x="2" y="280.6" width="15.5" height="0.8" fill="#3f3f3f" />
<path d="M6.5 296.4Q4.6 293.5 5.4 292.4Q6.2 291.8 7.2 293.2V288.6Q7.8 287.6 8.5 288.6V287.6Q9.3 286.6 10 287.7V288.2Q10.9 287.4 11.5 288.5V289.6Q12.5 289 12.9 290.2V294Q12.8 296 11.6 296.6Z" fill="#e8b890" stroke="#a87850" stroke-width="0.3"/>
<circle cx="8.4" cy="304.4" r="3.2" fill="#9cc8f0" stroke="#d8ecff" stroke-width="0.9"/><path d="M10.8 306.8L13.4 309.6" stroke="#b0c8e0" stroke-width="1.3"/>
<text x="65.5" y="165" font-size="6.2" fill="#f2f2f2" stroke="#f2f2f2" stroke-width="0.22" textLength="17.6" lengthAdjust="spacingAndGlyphs" text-anchor="middle" >Page 1</text>
<rect x="24.2" y="178" width="82.8" height="58.6" fill="#ffffff" />
<text x="65.5" y="248.2" font-size="6.2" fill="#f2f2f2" stroke="#f2f2f2" stroke-width="0.22" textLength="17.6" lengthAdjust="spacingAndGlyphs" text-anchor="middle" >Page 2</text>
<rect x="24.2" y="261.2" width="82.8" height="58.6" fill="#ffffff" />
<text x="65.5" y="331.3" font-size="6.2" fill="#f2f2f2" stroke="#f2f2f2" stroke-width="0.22" textLength="17.6" lengthAdjust="spacingAndGlyphs" text-anchor="middle" >Page 3</text>
<rect x="22.2" y="342.7" width="86.6" height="61.4" fill="#8a8a8a" />
<rect x="24.2" y="344.6" width="82.8" height="58.6" fill="#ffffff" />
<text x="65.5" y="414.3" font-size="6.2" fill="#f2f2f2" stroke="#f2f2f2" stroke-width="0.22" textLength="17.6" lengthAdjust="spacingAndGlyphs" text-anchor="middle" >Page 4</text>
<rect x="24.2" y="427.2" width="82.8" height="58.6" fill="#ffffff" />
<text x="65.5" y="497.6" font-size="6.2" fill="#f2f2f2" stroke="#f2f2f2" stroke-width="0.22" textLength="17.6" lengthAdjust="spacingAndGlyphs" text-anchor="middle" >Page 5</text>
<path d="M27.8 183.8H39.8" stroke="#3fb0a8" stroke-width="1.1" fill="none" stroke-dasharray="2.2 0.4 1.6 0.3"/>
<path d="M27.8 187.1H64.4" stroke="#7fd2ca" stroke-width="0.9" fill="none" stroke-dasharray="1.8 0.5 2.6 0.4 1.2 0.4"/>
<path d="M47 187.1H64.4" stroke="#4fc0b6" stroke-width="0.9" fill="none" stroke-dasharray="2 0.4"/>
<path d="M27.8 190.6H51.3" stroke="#333" stroke-width="0.9" fill="none" stroke-dasharray="2.4 0.4 1.4 0.3"/>
<path d="M52 190.9H64" stroke="#aaa" stroke-width="0.5" fill="none" stroke-dasharray="1.6 0.6"/>
<path d="M27.8 193.8H64" stroke="#8a8a8a" stroke-width="0.6" fill="none" stroke-dasharray="1.8 0.5 1 0.4 2.4 0.5"/>
<path d="M27.8 196.9H33" stroke="#777" stroke-width="0.6" fill="none" stroke-dasharray="1.5 0.4"/>
<path d="M27.8 198.4H62" stroke="#9a9a9a" stroke-width="0.55" fill="none" stroke-dasharray="1.4 0.6 2.2 0.5 0.9 0.4"/>
<path d="M27.8 200H62" stroke="#9a9a9a" stroke-width="0.55" fill="none" stroke-dasharray="2 0.5 1.2 0.6 1.7 0.4"/>
<path d="M27.8 201.9H53" stroke="#a4a4a4" stroke-width="0.55" fill="none" stroke-dasharray="1.2 0.5 2 0.6"/>
<text x="26.4" y="236" font-size="2.8" fill="#333" stroke="#333" stroke-width="0.1" >VL</text>
<path d="M31 233.2H38" stroke="#999" stroke-width="0.4" fill="none"/>
<rect x="59.5" y="290.3" width="10" height="0.6" fill="#a8dcd6" />
<rect x="56" y="292" width="16" height="0.3" fill="#e4f2f0" />
<g transform="translate(24.2 344.6) scale(0.15154) translate(-202.4 -95.6)" fill="none" opacity="0.8">
<path d="M740.4 95.9V482.3" stroke="#cfd0de" stroke-width="1.68" fill="none" />
<path d="M278.3 154V420 M290.2 154V420 M528.3 154V420 M583.6 128V280 M649.6 128V421 M621.3 128V154 M562.5 128V154 M665.5 219V421 M670 219V250" stroke="#c4c4c4" stroke-width="1.32" fill="none" />
<path d="M256.3 168H665 M584 154.2H665" stroke="#c4c4c4" stroke-width="1.32" fill="none" />
<path d="M243 437.8H734" stroke="#c4c4c4" stroke-width="1.44" fill="none" stroke-dasharray="1.6 1.4"/>
<path d="M237.2 154V384" stroke="#c8c8c8" stroke-width="1.44" fill="none" stroke-dasharray="1.2 1.6"/>
<path d="M584 128.3H621 M584 154.2H621" stroke="#9e9e9e" stroke-width="1.44" fill="none" stroke-dasharray="4 2.2"/>
<path d="M649.6 128.3V154" stroke="#9e9e9e" stroke-width="1.2" fill="none" stroke-dasharray="1.2 1.2"/>
<path d="M550.8 128.5V154" stroke="#c4c4c4" stroke-width="1.2" fill="none" stroke-dasharray="2 1.5"/>
<path d="M251.2 154V247.5 M253 154V247.5 M251.2 291.7V384 M253 291.7V384 M256.3 154V420" stroke="#9e9e9e" stroke-width="1.32" fill="none" />
<path d="M250.4 190.5h3.4v4h-3.4z M250.4 328.3h3.4v4h-3.4z" stroke="#9e9e9e" stroke-width="1.2" fill="none" />
<path d="M281.3 420.2H362.8 M281.3 421.6H362.8 M427.5 420.2H508.3 M427.5 421.6H508.3 M570.8 420.4H651.3 M570.8 421.8H651.3" stroke="#9e9e9e" stroke-width="1.32" fill="none" />
<path d="M715 421.6H735" stroke="#c4c4c4" stroke-width="1.2" fill="none" />
<rect x="321.4" y="420.1" width="1.6" height="1.6" fill="#666" stroke="none"/>
<rect x="467.0" y="420.1" width="1.6" height="1.6" fill="#666" stroke="none"/>
<rect x="609.7" y="420.1" width="1.6" height="1.6" fill="#666" stroke="none"/>
<path d="M319.6 199.2H356.1V376.2H319.6Z" stroke="#9e9e9e" stroke-width="1.44" fill="none" />
<path d="M322.3 206.4H341.6V234.4H322.3Z" stroke="#9e9e9e" stroke-width="1.44" fill="none" />
<path d="M324.6 215v1M324.6 217.6v1M324.6 220.2v1M324.6 222.8v1M324.6 225.4v1" stroke="#9e9e9e" stroke-width="1.2" fill="none" />
<circle cx="328.8" cy="211.8" r="2.7" stroke="#9e9e9e" stroke-width="0.5"/>
<circle cx="328.8" cy="211.8" r="1.4" stroke="#9e9e9e" stroke-width="0.4"/>
<path d="M325.3 211.8H332.3 M328.8 208.3V215.3" stroke="#9e9e9e" stroke-width="0.84" fill="none" />
<circle cx="337.2" cy="211.8" r="2.7" stroke="#9e9e9e" stroke-width="0.5"/>
<circle cx="337.2" cy="211.8" r="1.4" stroke="#9e9e9e" stroke-width="0.4"/>
<path d="M333.7 211.8H340.7 M337.2 208.3V215.3" stroke="#9e9e9e" stroke-width="0.84" fill="none" />
<circle cx="333" cy="220.4" r="3.4" stroke="#9e9e9e" stroke-width="0.5"/>
<circle cx="333" cy="220.4" r="1.7" stroke="#9e9e9e" stroke-width="0.4"/>
<path d="M328.8 220.4H337.2 M333 216.2V224.60000000000002" stroke="#9e9e9e" stroke-width="0.84" fill="none" />
<circle cx="328.8" cy="229.6" r="2.7" stroke="#9e9e9e" stroke-width="0.5"/>
<circle cx="328.8" cy="229.6" r="1.4" stroke="#9e9e9e" stroke-width="0.4"/>
<path d="M325.3 229.6H332.3 M328.8 226.1V233.1" stroke="#9e9e9e" stroke-width="0.84" fill="none" />
<circle cx="337.2" cy="229.6" r="2.7" stroke="#9e9e9e" stroke-width="0.5"/>
<circle cx="337.2" cy="229.6" r="1.4" stroke="#9e9e9e" stroke-width="0.4"/>
<path d="M333.7 229.6H340.7 M337.2 226.1V233.1" stroke="#9e9e9e" stroke-width="0.84" fill="none" />
<path d="M322.7 243.7H339.3V270.3H322.7Z" stroke="#9e9e9e" stroke-width="1.92" fill="none" />
<path d="M333.5 256h2" stroke="#9e9e9e" stroke-width="1.44" fill="none" />
<path d="M319.6 291.7H312.3Q311.2 291.7 311.2 292.9V304.7Q311.2 306.09999999999997 312.5 306.2L319.6 305.3" stroke="#c4c4c4" stroke-width="1.44" fill="none" />
<path d="M356.1 291.7H363.4Q364.6 291.7 364.6 292.9V304.7Q364.6 306.09999999999997 363.2 306.2L356.1 305.3" stroke="#c4c4c4" stroke-width="1.44" fill="none" />
<path d="M319.6 317.5H312.3Q311.2 317.5 311.2 318.7V330.5Q311.2 331.9 312.5 332.0L319.6 331.1" stroke="#c4c4c4" stroke-width="1.44" fill="none" />
<path d="M356.1 317.5H363.4Q364.6 317.5 364.6 318.7V330.5Q364.6 331.9 363.2 332.0L356.1 331.1" stroke="#c4c4c4" stroke-width="1.44" fill="none" />
<path d="M319.6 342H312.3Q311.2 342 311.2 343.2V355Q311.2 356.4 312.5 356.5L319.6 355.6" stroke="#c4c4c4" stroke-width="1.44" fill="none" />
<path d="M356.1 342H363.4Q364.6 342 364.6 343.2V355Q364.6 356.4 363.2 356.5L356.1 355.6" stroke="#c4c4c4" stroke-width="1.44" fill="none" />
<path d="M278.3 365.6H319.6 M278.3 366.6H319.6 M356.1 365.6H427.5 M356.1 366.6H427.5 M278.3 382H427.5 M427.5 317.2V382" stroke="#c4c4c4" stroke-width="1.44" fill="none" />
<path d="M394.4 202.2V317.2H540.8 M394.4 202.2H443.3V280 M406.7 202.2V317.2 M406.7 280H583.3" stroke="#9e9e9e" stroke-width="1.56" fill="none" />
<path d="M394.4 154V202.2" stroke="#9e9e9e" stroke-width="1.2" fill="none" />
<path d="M406.7 202.4 A58.9 58.9 0 1 1 491.1 280" stroke="#9e9e9e" stroke-width="1.32" fill="none" />
<path d="M405 317.2V366 M416.3 317.2V366 M405 341.2H427.5 M405 341.2L414.2 332.5" stroke="#9e9e9e" stroke-width="1.44" fill="none" />
<path d="M550.9 183.3H583.4 M550.9 183.3V280 M562.5 183.3V280 M572.4 183.3V280 M583.4 183.3V280 M550.9 217.2H583.4 M550.9 217.2L559.3 208.3" stroke="#9e9e9e" stroke-width="1.44" fill="none" />
<path d="M540.8 280V420 M570.4 280V420" stroke="#9e9e9e" stroke-width="1.44" fill="none" />
<circle cx="608.8" cy="364.5" r="28.8" stroke="#9e9e9e" stroke-width="0.55"/>
<circle cx="611.2" cy="342.2" r="18.1" stroke="#9e9e9e" stroke-width="0.55" fill="#fff"/>
<path d="M598.6 386 Q598 376.5 602 376 Q614 373.2 626.5 376 Q630 376.8 629.4 386 Q630.5 406.3 614 406.3 Q597.5 406.3 598.6 386Z" stroke="#555" stroke-width="1.68" fill="#fff" />
<path d="M601 377 L605.6 394.5 M627.5 377 L622.6 394.5 M606.4 389.6H621.6V395.5H606.4Z M600.5 397.5 Q614 392 627.8 397.5" stroke="#666" stroke-width="1.32" fill="none" />
<path d="M670 219.4 A31 31 0 0 1 700.9 250.3 H670" stroke="#c4c4c4" stroke-width="1.44" fill="none" />
<path d="M657 304.2H665.5 M657 304.2V318H665.5" stroke="#c4c4c4" stroke-width="1.44" fill="none" />
<path d="M237.2 110.4H242.4V154.2H237.2Z" stroke="#9a9a9a" stroke-width="1.2" fill="#ececec" />
<path d="M242.4 110.4H253.3V118.7H577.6V103.3H583.8V124.7H253.3V154.2H242.4Z" stroke="#454545" stroke-width="1.8" fill="#e8e8e8" stroke-linejoin="miter"/>
<path d="M253.3 128.3H584 M253.3 154.2H584" stroke="#666" stroke-width="1.92" fill="none" />
<path d="M256.3 128.3V154.2" stroke="#5a5a5a" stroke-width="2.16" fill="none" />
<path d="M278.9 128.3V154.2" stroke="#5c5c5c" stroke-width="3.12" fill="none" />
<path d="M301.0 128.3V154.2" stroke="#5c5c5c" stroke-width="3.12" fill="none" />
<path d="M323.0 128.3V154.2" stroke="#5c5c5c" stroke-width="3.12" fill="none" />
<path d="M345.1 128.3V154.2" stroke="#5c5c5c" stroke-width="3.12" fill="none" />
<path d="M367.1 128.3V154.2" stroke="#5c5c5c" stroke-width="3.12" fill="none" />
<path d="M389.2 128.3V154.2" stroke="#5c5c5c" stroke-width="3.12" fill="none" />
<path d="M396.2 128.5V154 M407.6 128.5V154" stroke="#8a8a8a" stroke-width="1.08" fill="none" stroke-dasharray="1.8 1.2"/>
<path d="M411.2 128.3V154.2" stroke="#5c5c5c" stroke-width="3.12" fill="none" />
<path d="M418.2 128.5V154 M429.6 128.5V154" stroke="#8a8a8a" stroke-width="1.08" fill="none" stroke-dasharray="1.8 1.2"/>
<path d="M433.3 128.3V154.2" stroke="#5c5c5c" stroke-width="3.12" fill="none" />
<path d="M440.3 128.5V154 M451.7 128.5V154" stroke="#8a8a8a" stroke-width="1.08" fill="none" stroke-dasharray="1.8 1.2"/>
<path d="M455.4 128.3V154.2" stroke="#5c5c5c" stroke-width="3.12" fill="none" />
<path d="M462.4 128.5V154 M473.8 128.5V154" stroke="#8a8a8a" stroke-width="1.08" fill="none" stroke-dasharray="1.8 1.2"/>
<path d="M477.4 128.3V154.2" stroke="#5c5c5c" stroke-width="3.12" fill="none" />
<path d="M484.4 128.5V154 M495.8 128.5V154" stroke="#8a8a8a" stroke-width="1.08" fill="none" stroke-dasharray="1.8 1.2"/>
<path d="M499.4 128.3V154.2" stroke="#5c5c5c" stroke-width="3.12" fill="none" />
<path d="M506.4 128.5V154 M517.9 128.5V154" stroke="#8a8a8a" stroke-width="1.08" fill="none" stroke-dasharray="1.8 1.2"/>
<path d="M521.5 128.3V154.2" stroke="#5c5c5c" stroke-width="3.12" fill="none" />
<path d="M528.5 128.5V154 M539.9 128.5V154" stroke="#8a8a8a" stroke-width="1.08" fill="none" stroke-dasharray="1.8 1.2"/>
<path d="M543.5 128.3V154.2" stroke="#a0a0a0" stroke-width="2.16" fill="none" />
<path d="M621.3 124.3H665.3V128.3H621.3Z" stroke="#454545" stroke-width="1.92" fill="#e8e8e8" stroke-linejoin="miter"/>
<path d="M665.3 120H675.4V109.8H690V120H734.6V124.7H670.2V205.5H674.2V210.3H670.2V219.3H665.3Z" stroke="#454545" stroke-width="1.8" fill="#e8e8e8" stroke-linejoin="miter"/>
<path d="M665.3 120V219.3" stroke="#454545" stroke-width="2.64" fill="none" />
<path d="M703 205.5H734.5V210.3H703Z" stroke="#454545" stroke-width="1.92" fill="#e8e8e8" stroke-linejoin="miter"/>
<path d="M703 205.4H748.7" stroke="#454545" stroke-width="1.92" fill="none" />
<path d="M665.3 249.8H669.3V270.8H714.7V275.3H692.5V412.5H690.8V421.2H715V427.5H651.3V421.2H674.2V412.5H687.5V275.3H665.3Z" stroke="#454545" stroke-width="1.8" fill="#e8e8e8" stroke-linejoin="miter"/>
<path d="M692.5 275.3V412.5" stroke="#454545" stroke-width="3.12" fill="none" />
<path d="M651.3 427.5H715V433.3H651.3Z" stroke="#454545" stroke-width="1.68" fill="#e8e8e8" />
<path d="M237.2 247.5H242.4V291.7H237.2Z" stroke="#9a9a9a" stroke-width="1.2" fill="#ececec" />
<path d="M242.4 247.5H251V245.8H253.3V247.5H256.3V291.7H253.3V293.4H251V291.7H242.4Z" stroke="#454545" stroke-width="1.92" fill="#e8e8e8" stroke-linejoin="miter"/>
<path d="M253.3 247.5V291.7" stroke="#454545" stroke-width="2.16" fill="none" />
<path d="M237.2 384.2H242.4V431.7H237.2Z" stroke="#9a9a9a" stroke-width="1.2" fill="#ececec" />
<path d="M242.4 384.2H251V382.4H253.3V415H256.3V419.5H281.3V426.3H242.4Z" stroke="#454545" stroke-width="1.8" fill="#e8e8e8" stroke-linejoin="miter"/>
<path d="M242.4 426.3H281.3V431.7H242.4Z" stroke="#454545" stroke-width="1.44" fill="#e8e8e8" />
<path d="M232.8 414.2H237.2V418.4H232.8Z" stroke="#9e9e9e" stroke-width="1.2" fill="none" />
<path d="M362.8 420H387.2V412H404.5V420H427.5V426.7H362.8Z" stroke="#454545" stroke-width="1.8" fill="#e8e8e8" stroke-linejoin="miter"/>
<path d="M362.8 426.7H427.5V432.5H362.8Z" stroke="#454545" stroke-width="1.68" fill="#e8e8e8" />
<path d="M508.3 420H530.8V412H547V420H570.8V427.5H508.3Z" stroke="#454545" stroke-width="1.8" fill="#e8e8e8" stroke-linejoin="miter"/>
<path d="M508.3 427.5H570.8V432.5H508.3Z" stroke="#454545" stroke-width="1.68" fill="#e8e8e8" />
</g>
<text x="26.4" y="401.6" font-size="2.8" fill="#333" stroke="#333" stroke-width="0.1" >VL</text>
<path d="M31 398.8H38" stroke="#999" stroke-width="0.4" fill="none"/>
<path d="M27.8 436.5H47" stroke="#8fdccc" stroke-width="1.1" fill="none" stroke-dasharray="1.8 0.4 2.4 0.4 1.2 0.3"/>
<path d="M47 436.5H64.4" stroke="#4cc6a8" stroke-width="1.2" fill="none"/>
<path d="M27.8 440H51" stroke="#333" stroke-width="0.9" fill="none" stroke-dasharray="2.4 0.4 1.4 0.3"/>
<path d="M27.8 442H64" stroke="#8a8a8a" stroke-width="0.6" fill="none" stroke-dasharray="1.8 0.5 1 0.4 2.4 0.5"/>
<path d="M27.8 443.8H62" stroke="#999" stroke-width="0.55" fill="none" stroke-dasharray="1.4 0.6 2.2 0.5 0.9 0.4"/>
<path d="M27.8 446.6H34" stroke="#555" stroke-width="0.7" fill="none" stroke-dasharray="1.5 0.3"/>
<path d="M35 447.4H62" stroke="#aaa" stroke-width="0.5" fill="none" stroke-dasharray="1.4 0.6 2.2 0.5"/>
<path d="M27.8 449.4H62" stroke="#9a9a9a" stroke-width="0.55" fill="none" stroke-dasharray="2 0.5 1.2 0.6 1.7 0.4"/>
<path d="M27.8 451H53" stroke="#a4a4a4" stroke-width="0.55" fill="none" stroke-dasharray="1.2 0.5 2 0.6"/>
<path d="M69.5 436.8H91.5 M94.5 436.5H101 M71 437.5V456 M76.5 441V454 M79 439V456 M88 444V456 M97.5 437V456.4 M69.5 446H72 M70 456.4H75 M77 456.4H83 M86 456.4H92 M95.5 456.4H100.5 M73 443h3" stroke="#d2d2d2" stroke-width="0.5" fill="none"/>
<path d="M97.5 446V456.4 M76.5 448V454" stroke="#a8a8a8" stroke-width="0.5" fill="none"/>
<text x="26.4" y="484.8" font-size="2.8" fill="#333" stroke="#333" stroke-width="0.1" >VL</text>
<path d="M31 482H38" stroke="#999" stroke-width="0.4" fill="none"/>
<rect x="24" y="510.2" width="83" height="1.6" fill="#7a7a7a" />
</g>
<rect x="119" y="502" width="712" height="9.5" fill="#343434" />
<path d="M125.6 504.8V508.4L123.2 506.6Z" fill="#8a8a8a"/>
<rect x="364" y="504.7" width="208.5" height="4.4" fill="#6c6c6c" rx="2.2"/>
<rect x="0" y="511.5" width="960" height="9.5" fill="#2b2b2b" />
<rect x="24" y="510.2" width="83" height="1.6" fill="#7a7a7a" />
<path d="M3.2 515.3V520 M8.4 515.3V520L4.6 517.6Z M17 515.3V520L13.2 517.6Z" fill="#d8d8d8" stroke="#d8d8d8" stroke-width="0.8"/>
<path d="M61.6 515.3V520L65.4 517.6Z M70.5 515.3V520L74.3 517.6Z M75.6 515.3V520" fill="#d8d8d8" stroke="#d8d8d8" stroke-width="0.8"/>
<text x="32.8" y="520" font-size="5.8" fill="#e8e8e8" stroke="#e8e8e8" stroke-width="0.22" textLength="14" lengthAdjust="spacingAndGlyphs" >4 of 8</text>
<rect x="80.5" y="514.2" width="5.4" height="6.6" fill="#777" stroke="#c8c8c8" stroke-width="0.7"/><path d="M82.2 514.2V520.8M84.2 514.2V520.8" stroke="#c8c8c8" stroke-width="0.5"/>
<path d="M95.3 519.8V516.6Q95.3 515.2 97 515.2Q98.7 515.2 98.7 516.6V519.8Z" fill="#555"/><rect x="94.6" y="519.4" width="4.8" height="1.3" fill="#4a4a4a"/>
<text x="108.2" y="519.9" font-size="5.9" fill="#d6d6d6" textLength="331.5" lengthAdjust="spacingAndGlyphs">'soggiorno 1' selected. <tspan font-weight="bold" fill="#f4f4f4">Drag</tspan> to move selection. <tspan font-weight="bold" fill="#f4f4f4">Click</tspan> another object to select it. <tspan font-weight="bold" fill="#f4f4f4">Click</tspan> on an empty area to deselect selection.</text>
<g id="right">
<rect x="821.4" y="65" width="10.3" height="446.5" fill="#383838" />
<rect x="831.4" y="38" width="128.6" height="473.5" fill="#393939" />
<path d="M824.2 71.8H828L826.1 68.6Z" fill="#8c8c8c"/>
<path d="M824 496.2H827.6L825.8 499Z" fill="#8c8c8c"/>
<path d="M814.8 505V509L817.6 507Z" fill="#8c8c8c"/>
<rect x="824.6" y="241" width="3.2" height="39" fill="#5e5e5e" rx="1.5"/>
<rect x="831.4" y="54" width="128.6" height="11" fill="#2a2a2a" />
<rect x="841" y="54" width="17.600000000000023" height="11" fill="#393939" />
<path d="M835.6 56.5V62.5" stroke="#555" stroke-width="1" stroke-dasharray="0.9 0.9"/>
<text x="843" y="61.3" font-size="6.2" fill="#f4f4f4" stroke="#f4f4f4" stroke-width="0.22" textLength="13.3" lengthAdjust="spacingAndGlyphs" >Color</text>
<text x="861.3" y="61.3" font-size="6.2" fill="#cfcfcf" stroke="#cfcfcf" stroke-width="0.22" textLength="22.0" lengthAdjust="spacingAndGlyphs" >Swatches</text>
<text x="888.8" y="61.3" font-size="6.2" fill="#cfcfcf" stroke="#cfcfcf" stroke-width="0.22" textLength="15.4" lengthAdjust="spacingAndGlyphs" >Stroke</text>
<rect x="957.6" y="57" width="2.4" height="5" fill="#bdbdbd" />
<circle cx="845.3" cy="80.8" r="4.9" fill="#303030" stroke="#000" stroke-width="1.8"/>
<circle cx="851.8" cy="86.8" r="5.9" fill="#ebebeb"/>
<path d="M852.6 75.6Q856.4 76 856.4 80.2" stroke="#b8b8b8" stroke-width="0.9" fill="none"/><path d="M855.1 79.6H857.7L856.4 81.6Z" fill="#b8b8b8"/>
<circle cx="842.2" cy="89.6" r="2.3" fill="#f4f4f4"/><path d="M840.7 91.1L843.7 88.1" stroke="#d03030" stroke-width="0.8"/>
<path d="M863.8 80.8L864.4 78.9L868 75.3L869.4 76.7L865.8 80.3Z" fill="#c8b888"/><path d="M867.6 74.6L870.2 77.2L871.4 75L869.8 73.4Z" fill="#666"/>
<circle cx="876.7" cy="77.6" r="3" fill="#f0121f"/>
<rect x="911.3" y="85.8" width="8" height="8.4" fill="#2a2a2a" />
<rect x="913.4" y="89.4" width="3.8" height="3.2" fill="#bdbdbd"/><path d="M914.2 89.4V88.2Q914.2 87.2 915.3 87.2Q916.4 87.2 916.4 88.2V89.4" stroke="#bdbdbd" stroke-width="0.7" fill="none"/>
<rect x="921" y="85.8" width="39" height="8.4" fill="#353535" />
<text x="924.2" y="91.8" font-size="5.4" fill="#dcdcdc" stroke="#dcdcdc" stroke-width="0.22" textLength="9.2" lengthAdjust="spacingAndGlyphs" >RGB</text>
<path d="M955.6 89.4H958.8L957.2 91.4Z" fill="#e0e0e0"/>
<defs>
<linearGradient id="gR"><stop offset="0" stop-color="#35bccb"/><stop offset="0.45" stop-color="#8fd6df"/><stop offset="0.9" stop-color="#f2f2f2"/></linearGradient>
<linearGradient id="gG"><stop offset="0" stop-color="#cc3eb0"/><stop offset="0.45" stop-color="#dc8ccc"/><stop offset="0.9" stop-color="#f2f2f2"/></linearGradient>
<linearGradient id="gB"><stop offset="0" stop-color="#f2e41c"/><stop offset="0.45" stop-color="#f2ea88"/><stop offset="0.9" stop-color="#f2f2f2"/></linearGradient>
<linearGradient id="gHue"><stop offset="0" stop-color="#f41414"/><stop offset="0.08" stop-color="#f88a18"/><stop offset="0.16" stop-color="#f6ea1c"/><stop offset="0.27" stop-color="#9ccc28"/><stop offset="0.4" stop-color="#30a838"/><stop offset="0.5" stop-color="#28b8a0"/><stop offset="0.57" stop-color="#28a8e8"/><stop offset="0.7" stop-color="#2c4cc0"/><stop offset="0.82" stop-color="#8434c0"/><stop offset="0.93" stop-color="#f01490"/><stop offset="1" stop-color="#f41430"/></linearGradient>
<linearGradient id="gWB" x1="0" y1="0" x2="0" y2="1"><stop offset="0" stop-color="#fff" stop-opacity="1"/><stop offset="0.12" stop-color="#fff" stop-opacity="0.9"/><stop offset="0.42" stop-color="#fff" stop-opacity="0"/><stop offset="0.5" stop-color="#000" stop-opacity="0"/><stop offset="0.95" stop-color="#000" stop-opacity="1"/></linearGradient>
<linearGradient id="gOp"><stop offset="0" stop-color="#f0f0f0"/><stop offset="0.6" stop-color="#bdbdbd"/><stop offset="1" stop-color="#4a4a4a"/></linearGradient>
</defs>
<text x="839.2" y="104.2" font-size="5.6" fill="#d8d8d8" stroke="#d8d8d8" stroke-width="0.22" textLength="4.8" lengthAdjust="spacingAndGlyphs" >R:</text>
<rect x="845.8" y="100.4" width="93.4" height="3.2" fill="url(#gR)" rx="1.6"/>
<circle cx="930" cy="102" r="2.1" fill="#e6e6e6" stroke="#8e8e8e" stroke-width="0.8"/>
<rect x="942.5" y="97.5" width="17.5" height="9.2" fill="#2b2b2b" />
<text x="945.2" y="104.2" font-size="6" fill="#e4e4e4" stroke="#e4e4e4" stroke-width="0.22" textLength="8.8" lengthAdjust="spacingAndGlyphs" >235</text>
<text x="839.2" y="116.10000000000001" font-size="5.6" fill="#d8d8d8" stroke="#d8d8d8" stroke-width="0.22" textLength="4.8" lengthAdjust="spacingAndGlyphs" >G:</text>
<rect x="845.8" y="112.30000000000001" width="93.4" height="3.2" fill="url(#gG)" rx="1.6"/>
<circle cx="930" cy="113.9" r="2.1" fill="#e6e6e6" stroke="#8e8e8e" stroke-width="0.8"/>
<rect x="942.5" y="109.4" width="17.5" height="9.2" fill="#2b2b2b" />
<text x="945.2" y="116.10000000000001" font-size="6" fill="#e4e4e4" stroke="#e4e4e4" stroke-width="0.22" textLength="8.8" lengthAdjust="spacingAndGlyphs" >235</text>
<text x="839.2" y="128.4" font-size="5.6" fill="#d8d8d8" stroke="#d8d8d8" stroke-width="0.22" textLength="4.8" lengthAdjust="spacingAndGlyphs" >B:</text>
<rect x="845.8" y="124.60000000000001" width="93.4" height="3.2" fill="url(#gB)" rx="1.6"/>
<circle cx="930" cy="126.2" r="2.1" fill="#e6e6e6" stroke="#8e8e8e" stroke-width="0.8"/>
<rect x="942.5" y="121.7" width="17.5" height="9.2" fill="#2b2b2b" />
<text x="945.2" y="128.4" font-size="6" fill="#e4e4e4" stroke="#e4e4e4" stroke-width="0.22" textLength="8.8" lengthAdjust="spacingAndGlyphs" >235</text>
<rect x="838.7" y="135" width="121.3" height="25.3" fill="url(#gHue)" />
<rect x="838.7" y="135" width="121.3" height="25.3" fill="url(#gWB)" />
<text x="838.7" y="169.2" font-size="5.8" fill="#e0e0e0" stroke="#e0e0e0" stroke-width="0.22" textLength="16.6" lengthAdjust="spacingAndGlyphs" >Opacity</text>
<circle cx="844.5" cy="175.3" r="3" fill="#ededed"/>
<rect x="851.7" y="173.7" width="68.3" height="3.2" fill="url(#gOp)" rx="1.6"/>
<circle cx="925" cy="175.4" r="2.3" fill="none" stroke="#e0e0e0" stroke-width="0.8"/>
<rect x="930" y="170" width="22.5" height="9.5" fill="#2b2b2b" />
<text x="933.3" y="177.3" font-size="5.8" fill="#e8e8e8" stroke="#e8e8e8" stroke-width="0.22" textLength="14.7" lengthAdjust="spacingAndGlyphs" >100 %</text>
<path d="M954.7 174.4H957.9L956.3 176.4Z" fill="#e0e0e0"/>
<rect x="831.4" y="184.3" width="128.6" height="11.5" fill="#2a2a2a" />
<rect x="840.5" y="184.3" width="19.5" height="11.5" fill="#393939" />
<path d="M835.6 186.8V193.3" stroke="#555" stroke-width="1" stroke-dasharray="0.9 0.9"/>
<text x="842.8" y="192.9" font-size="6.2" fill="#f4f4f4" stroke="#f4f4f4" stroke-width="0.22" textLength="15.5" lengthAdjust="spacingAndGlyphs" >Layers</text>
<text x="863" y="192.9" font-size="6.2" fill="#cfcfcf" stroke="#cfcfcf" stroke-width="0.22" textLength="23.3" lengthAdjust="spacingAndGlyphs" >Character</text>
<text x="891.3" y="192.9" font-size="6.2" fill="#cfcfcf" stroke="#cfcfcf" stroke-width="0.22" textLength="24.2" lengthAdjust="spacingAndGlyphs" >Paragraph</text>
<text x="921.2" y="192.9" font-size="6.2" fill="#cfcfcf" stroke="#cfcfcf" stroke-width="0.22" textLength="25.0" lengthAdjust="spacingAndGlyphs" >Text Styles</text>
<rect x="957.6" y="187.3" width="2.4" height="5.5" fill="#bdbdbd" />
<text x="835.5" y="205.8" font-size="5.6" fill="#e0e0e0" stroke="#e0e0e0" stroke-width="0.22" textLength="18.2" lengthAdjust="spacingAndGlyphs" >Opacity:</text>
<rect x="856" y="199.4" width="37.5" height="9" fill="#323232" />
<text x="858.7" y="205.8" font-size="5.8" fill="#e8e8e8" stroke="#e8e8e8" stroke-width="0.22" textLength="14.6" lengthAdjust="spacingAndGlyphs" >100 %</text>
<path d="M888.4 202.5H891.6L890 204.5Z" fill="#e0e0e0"/>
<rect x="895.5" y="199.4" width="46.2" height="9" fill="#323232" />
<text x="898" y="205.8" font-size="5.8" fill="#e8e8e8" stroke="#e8e8e8" stroke-width="0.22" textLength="17.8" lengthAdjust="spacingAndGlyphs" >Normal</text>
<path d="M937.1 202.5H940.3L938.7 204.5Z" fill="#e0e0e0"/>
<circle cx="948.3" cy="203.4" r="2.3" fill="none" stroke="#c8c8c8" stroke-width="1.3"/><path d="M948.3 200V206.8M944.9 203.4H951.7M945.9 201L950.7 205.8M950.7 201L945.9 205.8" stroke="#c8c8c8" stroke-width="0.8"/><circle cx="948.3" cy="203.4" r="1" fill="#393939"/>
<rect x="957" y="201" width="3" height="5" fill="#bbb" />
<rect x="831.6" y="210" width="128.4" height="79" fill="#262626" />
<rect x="831.6" y="210.6" width="126.4" height="15.4" fill="#5b8fdd" />
<rect x="831.6" y="226.8" width="128.4" height="15.0" fill="#373737" />
<rect x="831.6" y="242.6" width="128.4" height="14.8" fill="#373737" />
<rect x="831.6" y="258.2" width="128.4" height="14.8" fill="#373737" />
<rect x="831.6" y="273.8" width="128.4" height="14.8" fill="#373737" />
<rect x="841.6" y="210.6" width="14.8" height="15.4" fill="#1d2a44" />
<rect x="842.4" y="211.2" width="13.4" height="14.2" fill="#232323" />
<text x="857.8" y="221.3" font-size="6" fill="#ffffff" textLength="82.7" lengthAdjust="spacingAndGlyphs"><tspan font-weight="bold">soggiorno 1</tspan><tspan fill="#c9d8f2"> (Embedded doc...</tspan></text>
<rect x="950.2" y="215.20000000000002" width="6.2" height="6.2" rx="1" fill="none" stroke="#c4c4c4" stroke-width="0.65"/><path d="M951.8 218.6L953 220.0L955.2 216.8" stroke="#dcdcdc" stroke-width="0.8" fill="none"/>
<path d="M843.3 229.20000000000002H848V230.70000000000002H855V238.4H843.3Z" fill="#b4b4b4"/><path d="M843.3 231.8H855" stroke="#8e8e8e" stroke-width="0.5"/>
<text x="857.8" y="236.70000000000002" font-size="6" fill="#ffffff" textLength="40.2" lengthAdjust="spacingAndGlyphs"><tspan font-weight="bold">Layer 1</tspan><tspan fill="#c4c4c4"> (Layer)</tspan></text>
<rect x="857" y="241.20000000000002" width="103" height="0.9" fill="#4a78c4" />
<rect x="831.6" y="241.20000000000002" width="25.4" height="0.9" fill="#4a78c4" opacity="0.4"/>
<rect x="950.2" y="230.90000000000003" width="6.2" height="6.2" rx="1" fill="none" stroke="#c4c4c4" stroke-width="0.65"/><path d="M951.8 234.3L953 235.70000000000002L955.2 232.50000000000003" stroke="#dcdcdc" stroke-width="0.8" fill="none"/>
<path d="M843.3 245.0H848V246.5H855V254.2H843.3Z" fill="#b4b4b4"/><path d="M843.3 247.6H855" stroke="#8e8e8e" stroke-width="0.5"/>
<text x="857.8" y="252.5" font-size="6" fill="#ffffff" textLength="30.5" lengthAdjust="spacingAndGlyphs"><tspan font-weight="bold">img</tspan><tspan fill="#c4c4c4"> (Layer)</tspan></text>
<rect x="857" y="256.79999999999995" width="103" height="0.9" fill="#9c2222" />
<rect x="831.6" y="256.79999999999995" width="25.4" height="0.9" fill="#9c2222" opacity="0.4"/>
<rect x="950.2" y="246.60000000000002" width="6.2" height="6.2" rx="1" fill="none" stroke="#c4c4c4" stroke-width="0.65"/><path d="M951.8 250.0L953 251.4L955.2 248.20000000000002" stroke="#dcdcdc" stroke-width="0.8" fill="none"/>
<path d="M843.3 260.59999999999997H848V262.09999999999997H855V269.79999999999995H843.3Z" fill="#b4b4b4"/><path d="M843.3 263.2H855" stroke="#8e8e8e" stroke-width="0.5"/>
<text x="857.8" y="268.09999999999997" font-size="6" fill="#ffffff" textLength="53.5" lengthAdjust="spacingAndGlyphs"><tspan font-weight="bold">background</tspan><tspan fill="#c4c4c4"> (Layer)</tspan></text>
<rect x="857" y="272.4" width="103" height="0.9" fill="#3c963c" />
<rect x="831.6" y="272.4" width="25.4" height="0.9" fill="#3c963c" opacity="0.4"/>
<rect x="950.2" y="262.20000000000005" width="6.2" height="6.2" rx="1" fill="none" stroke="#c4c4c4" stroke-width="0.65"/><path d="M951.8 265.6L953 267.00000000000006L955.2 263.8" stroke="#dcdcdc" stroke-width="0.8" fill="none"/>
<rect x="831.6" y="273.8" width="1.4" height="14.8" fill="#b8703a" />
<path d="M835.4 278.9V283.7L838.6 281.3Z" fill="#e4e4e4"/>
<rect x="842.2" y="274.6" width="13.6" height="13.4" fill="#2a2a2a" />
<text x="857.8" y="283.3" font-size="6" fill="#b4b4b4" stroke="#b4b4b4" stroke-width="0.22" textLength="28.4" lengthAdjust="spacingAndGlyphs" >(C-pagina)</text>
<rect x="950.2" y="277.8" width="6.2" height="6.2" rx="1" fill="none" stroke="#c4c4c4" stroke-width="0.65"/><path d="M951.8 281.2L953 282.6L955.2 279.4" stroke="#dcdcdc" stroke-width="0.8" fill="none"/>
<rect x="831.6" y="289.4" width="128.4" height="147" fill="#333333" />
<rect x="834" y="436.3" width="126" height="10.6" fill="#434343" />
<path d="M835.6 439.6L838.8 438.2L842 439.6L838.8 441Z M835.6 441.4L838.8 442.8L842 441.4 M835.6 443.2L838.8 444.6L842 443.2" fill="#bcbcbc" stroke="#bcbcbc" stroke-width="0.6"/>
<rect x="881.4" y="438.8" width="5.6" height="5.4" fill="#555" stroke="#d0d0d0" stroke-width="1"/><circle cx="884.2" cy="441.5" r="1.6" fill="#d8d8d8"/>
<circle cx="895.3" cy="441.5" r="2.7" fill="#666" stroke="#c8c8c8" stroke-width="0.7"/><path d="M895.3 438.8A2.7 2.7 0 0 0 895.3 444.2Z" fill="#d8d8d8"/>
<text x="903.6" y="443.6" font-size="6.4" fill="#d8d8d8" stroke="#d8d8d8" stroke-width="0.22" font-style="italic">fx</text>
<path d="M946.2 438.4H949.2L950.6 439.8V444.8H946.2Z" fill="none" stroke="#d0d0d0" stroke-width="0.8"/>
<rect x="957.2" y="439" width="3" height="5.6" fill="#c0c0c0" />
<rect x="831.4" y="447.5" width="128.6" height="11.3" fill="#2a2a2a" />
<rect x="840.8" y="447.5" width="28.40000000000009" height="11.3" fill="#393939" />
<path d="M835.6 450.0V456.3" stroke="#555" stroke-width="1" stroke-dasharray="0.9 0.9"/>
<text x="843" y="454.90000000000003" font-size="6.2" fill="#f4f4f4" stroke="#f4f4f4" stroke-width="0.22" textLength="24.2" lengthAdjust="spacingAndGlyphs" >Transform</text>
<text x="872.5" y="454.90000000000003" font-size="6.2" fill="#cfcfcf" stroke="#cfcfcf" stroke-width="0.22" textLength="17.2" lengthAdjust="spacingAndGlyphs" >History</text>
<text x="894.7" y="454.90000000000003" font-size="6.2" fill="#cfcfcf" stroke="#cfcfcf" stroke-width="0.22" textLength="23.6" lengthAdjust="spacingAndGlyphs" >Navigator</text>
<rect x="845.8" y="473.2" width="11.2" height="11.2" fill="#6a6a6a" />
<rect x="842.3000000000001" y="469.7" width="2.6" height="2.6" fill="#bdbdbd" />
<rect x="842.3000000000001" y="477.5" width="2.6" height="2.6" fill="#bdbdbd" />
<rect x="842.3000000000001" y="485.3" width="2.6" height="2.6" fill="#bdbdbd" />
<rect x="850.1" y="469.7" width="2.6" height="2.6" fill="#bdbdbd" />
<rect x="850.1" y="477.5" width="2.6" height="2.6" fill="#bdbdbd" />
<rect x="850.1" y="485.3" width="2.6" height="2.6" fill="#bdbdbd" />
<rect x="857.9000000000001" y="469.7" width="2.6" height="2.6" fill="#bdbdbd" />
<rect x="857.9000000000001" y="477.5" width="2.6" height="2.6" fill="#bdbdbd" />
<rect x="857.9000000000001" y="485.3" width="2.6" height="2.6" fill="#bdbdbd" />
<rect x="842" y="469.4" width="4.2" height="4.2" fill="#ffffff" />
<text x="870.8" y="471.8" font-size="5.6" fill="#dedede" stroke="#dedede" stroke-width="0.22" textLength="4.5" lengthAdjust="spacingAndGlyphs" >X:</text>
<rect x="877" y="465.6" width="32.7" height="9" fill="#2c2c2c" />
<text x="880" y="471.8" font-size="5.7" fill="#eaeaea" stroke="#eaeaea" stroke-width="0.22" textLength="11.7" lengthAdjust="spacingAndGlyphs" >0 cm</text>
<text x="915.5" y="471.8" font-size="5.6" fill="#dedede" stroke="#dedede" stroke-width="0.22" textLength="6.7" lengthAdjust="spacingAndGlyphs" >W:</text>
<rect x="923.8" y="465.6" width="32.5" height="9" fill="#2c2c2c" />
<text x="926.7" y="471.8" font-size="5.7" fill="#eaeaea" stroke="#eaeaea" stroke-width="0.22" textLength="19.1" lengthAdjust="spacingAndGlyphs" >29.7 cm</text>
<text x="870.8" y="484.2" font-size="5.6" fill="#dedede" stroke="#dedede" stroke-width="0.22" textLength="4.5" lengthAdjust="spacingAndGlyphs" >Y:</text>
<rect x="877" y="478.0" width="32.7" height="9" fill="#2c2c2c" />
<text x="880" y="484.2" font-size="5.7" fill="#eaeaea" stroke="#eaeaea" stroke-width="0.22" textLength="21.2" lengthAdjust="spacingAndGlyphs" >-5.42 cm</text>
<text x="916.7" y="484.2" font-size="5.6" fill="#dedede" stroke="#dedede" stroke-width="0.22" textLength="5.5" lengthAdjust="spacingAndGlyphs" >H:</text>
<rect x="923.8" y="478.0" width="32.5" height="9" fill="#2c2c2c" />
<text x="926.7" y="484.2" font-size="5.7" fill="#eaeaea" stroke="#eaeaea" stroke-width="0.22" textLength="22.0" lengthAdjust="spacingAndGlyphs" >20.99 cm</text>
<text x="870.8" y="498.7" font-size="5.6" fill="#dedede" stroke="#dedede" stroke-width="0.22" textLength="4.5" lengthAdjust="spacingAndGlyphs" >R:</text>
<rect x="877" y="492.5" width="32.7" height="9" fill="#2c2c2c" />
<text x="880" y="498.7" font-size="5.7" fill="#eaeaea" stroke="#eaeaea" stroke-width="0.22" textLength="6.7" lengthAdjust="spacingAndGlyphs" >0 °</text>
<path d="M904.6 496.59999999999997H907.8000000000001L906.2 498.59999999999997Z" fill="#e0e0e0"/>
<text x="917.8" y="498.7" font-size="5.6" fill="#dedede" stroke="#dedede" stroke-width="0.22" textLength="4.4" lengthAdjust="spacingAndGlyphs" >S:</text>
<rect x="923.8" y="492.5" width="32.5" height="9" fill="#2c2c2c" />
<text x="926.7" y="498.7" font-size="5.7" fill="#eaeaea" stroke="#eaeaea" stroke-width="0.22" textLength="6.6" lengthAdjust="spacingAndGlyphs" >0 °</text>
<path d="M951.1999999999999 496.59999999999997H954.4L952.8 498.59999999999997Z" fill="#e0e0e0"/>
</g>
<g id="menubar">
<defs><linearGradient id="lg" x1="0" y1="0" x2="1" y2="1"><stop offset="0" stop-color="#dc3a5e"/><stop offset="0.45" stop-color="#f07850"/><stop offset="1" stop-color="#f8a44c"/></linearGradient></defs>
<rect x="5.9" y="2.1" width="10.1" height="10.6" fill="url(#lg)" />
<path d="M9 12.7L13.4 3.2L16 6.5V12.7Z" fill="#fbbd86" opacity="0.55"/><path d="M5.9 12.7L10.5 2.1M8.6 12.7L13.4 3.2M11.6 12.7L16 5.5" stroke="#fbd0a8" stroke-width="0.5" fill="none" opacity="0.7"/>
<rect x="69" y="2.5" width="37" height="12" fill="#2d2d2d" />
<text x="28.7" y="10.8" font-size="6.1" fill="#ececec" stroke="#ececec" stroke-width="0.22" textLength="9.3" lengthAdjust="spacingAndGlyphs" >File</text>
<text x="50.5" y="10.8" font-size="6.1" fill="#ececec" stroke="#ececec" stroke-width="0.22" textLength="10.5" lengthAdjust="spacingAndGlyphs" >Edit</text>
<text x="74" y="10.8" font-size="6.1" fill="#ececec" stroke="#ececec" stroke-width="0.22" textLength="27.5" lengthAdjust="spacingAndGlyphs" >Document</text>
<text x="114.7" y="10.8" font-size="6.1" fill="#ececec" stroke="#ececec" stroke-width="0.22" textLength="10.3" lengthAdjust="spacingAndGlyphs" >Text</text>
<text x="138.5" y="10.8" font-size="6.1" fill="#ececec" stroke="#ececec" stroke-width="0.22" textLength="13.0" lengthAdjust="spacingAndGlyphs" >Table</text>
<text x="165.3" y="10.8" font-size="6.1" fill="#ececec" stroke="#ececec" stroke-width="0.22" textLength="13.9" lengthAdjust="spacingAndGlyphs" >Layer</text>
<text x="192.5" y="10.8" font-size="6.1" fill="#ececec" stroke="#ececec" stroke-width="0.22" textLength="15.5" lengthAdjust="spacingAndGlyphs" >Select</text>
<text x="221" y="10.8" font-size="6.1" fill="#ececec" stroke="#ececec" stroke-width="0.22" textLength="12.7" lengthAdjust="spacingAndGlyphs" >View</text>
<text x="246.7" y="10.8" font-size="6.1" fill="#ececec" stroke="#ececec" stroke-width="0.22" textLength="22.0" lengthAdjust="spacingAndGlyphs" >Window</text>
<text x="282" y="10.8" font-size="6.1" fill="#ececec" stroke="#ececec" stroke-width="0.22" textLength="12" lengthAdjust="spacingAndGlyphs" >Help</text>
</g>
<g id="dropdown">
<rect x="0" y="162" width="150.5" height="2.2" fill="#000" opacity="0.5"/>
<rect x="0" y="164.2" width="150.5" height="1.6" fill="#000" opacity="0.22"/>
<rect x="148" y="17" width="2.2" height="147" fill="#000" opacity="0.3"/>
<rect x="0" y="14.5" width="148" height="147.5" fill="#1f1e1e" />
<rect x="147.4" y="14.5" width="0.8" height="147.5" fill="#2e2e2e" />
<rect x="0" y="14.5" width="7" height="147.5" fill="#1b1b1b" />
<rect x="0" y="152.7" width="147.4" height="9.3" fill="#686868" />
<rect x="9" y="26" width="137" height="1" fill="#2b2b2b" />
<rect x="9" y="40" width="137" height="1" fill="#2b2b2b" />
<rect x="9" y="63" width="137" height="1" fill="#2b2b2b" />
<rect x="9" y="77" width="137" height="1" fill="#2b2b2b" />
<rect x="9" y="131" width="137" height="1" fill="#2b2b2b" />
<text x="10.6" y="21.3" font-size="6.05" fill="#f0f0f0" stroke="#f0f0f0" stroke-width="0.22" textLength="35.2" lengthAdjust="spacingAndGlyphs" >View Masters</text>
<text x="10.6" y="35" font-size="6.05" fill="#f0f0f0" stroke="#f0f0f0" stroke-width="0.22" textLength="25.2" lengthAdjust="spacingAndGlyphs" >Add Page</text>
<text x="88.9" y="35" font-size="6.05" fill="#f0f0f0" stroke="#f0f0f0" stroke-width="0.22" textLength="49.9" lengthAdjust="spacingAndGlyphs" >Ctrl+Shift+PageDn</text>
<text x="10.6" y="48.4" font-size="6.05" fill="#f0f0f0" stroke="#f0f0f0" stroke-width="0.22" textLength="32.4" lengthAdjust="spacingAndGlyphs" >Add Pages...</text>
<text x="10.6" y="58.6" font-size="6.05" fill="#f0f0f0" stroke="#f0f0f0" stroke-width="0.22" textLength="38.9" lengthAdjust="spacingAndGlyphs" >Delete Pages...</text>
<text x="10.6" y="71.8" font-size="6.05" fill="#f0f0f0" stroke="#f0f0f0" stroke-width="0.22" textLength="57.4" lengthAdjust="spacingAndGlyphs" >Add Pages from File...</text>
<text x="10.6" y="85.5" font-size="6.05" fill="#f0f0f0" stroke="#f0f0f0" stroke-width="0.22" textLength="25.6" lengthAdjust="spacingAndGlyphs" >First Page</text>
<text x="10.6" y="95.9" font-size="6.05" fill="#f0f0f0" stroke="#f0f0f0" stroke-width="0.22" textLength="36.9" lengthAdjust="spacingAndGlyphs" >Previous Page</text>
<text x="88.9" y="95.9" font-size="6.05" fill="#f0f0f0" stroke="#f0f0f0" stroke-width="0.22" textLength="33.9" lengthAdjust="spacingAndGlyphs" >Ctrl+PageUp</text>
<text x="10.6" y="106" font-size="6.05" fill="#f0f0f0" stroke="#f0f0f0" stroke-width="0.22" textLength="26.9" lengthAdjust="spacingAndGlyphs" >Next Page</text>
<text x="88.9" y="106" font-size="6.05" fill="#f0f0f0" stroke="#f0f0f0" stroke-width="0.22" textLength="33.9" lengthAdjust="spacingAndGlyphs" >Ctrl+PageDn</text>
<text x="10.6" y="116" font-size="6.05" fill="#f0f0f0" stroke="#f0f0f0" stroke-width="0.22" textLength="25.2" lengthAdjust="spacingAndGlyphs" >Last Page</text>
<text x="10.6" y="126.1" font-size="6.05" fill="#f0f0f0" stroke="#f0f0f0" stroke-width="0.22" textLength="34.1" lengthAdjust="spacingAndGlyphs" >Go to Page...</text>
<text x="10.6" y="139.5" font-size="6.05" fill="#f0f0f0" stroke="#f0f0f0" stroke-width="0.22" textLength="49.1" lengthAdjust="spacingAndGlyphs" >Section Manager...</text>
<text x="10.6" y="149.5" font-size="6.05" fill="#f0f0f0" stroke="#f0f0f0" stroke-width="0.22" textLength="41.6" lengthAdjust="spacingAndGlyphs" >Font Manager...</text>
<text x="10.6" y="159.5" font-size="6.05" fill="#f0f0f0" stroke="#f0f0f0" stroke-width="0.22" textLength="53.6" lengthAdjust="spacingAndGlyphs" >Resource Manager...</text>
</g>
</svg></body></html>
